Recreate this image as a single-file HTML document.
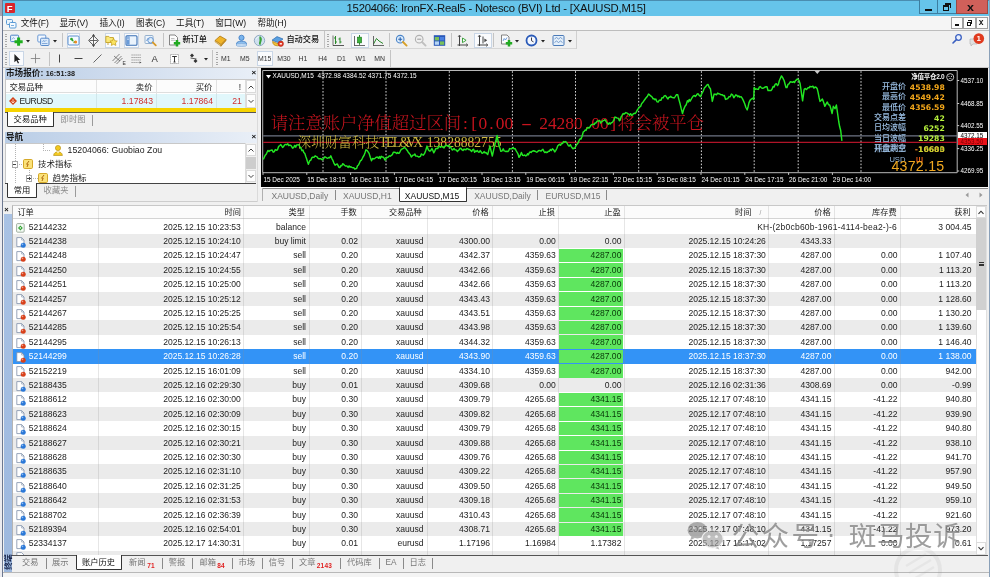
<!DOCTYPE html>
<html lang="zh"><head><meta charset="utf-8"><title>15204066: IronFX-Real5 - Notesco (BVI) Ltd - [XAUUSD,M15]</title>
<style>
*{box-sizing:border-box;margin:0;padding:0}
html,body{width:990px;height:577px;overflow:hidden;background:#f0f0f0}
body{font-family:"Liberation Sans","Noto Sans CJK SC",sans-serif;font-size:8.5px;color:#222;position:relative}
#app{position:absolute;left:0;top:0;width:990px;height:577px;overflow:hidden;background:#f0f0f0;will-change:transform}
.a{position:absolute;white-space:nowrap}
.t{position:absolute;white-space:nowrap;line-height:1}
.r{text-align:right}
svg{position:absolute;overflow:visible}
.hw{display:inline-block;width:.5em;text-align:center}
</style></head>
<body><div id="app">
<div class="a" style="left:0;top:0;width:990px;height:16.2px;background:#66c4ea"></div>
<div class="a" style="left:0;top:0;width:990px;height:1px;background:#4a8db0"></div>
<div class="a" style="left:4.5px;top:3px;width:10.6px;height:10.2px;background:#d8262c;border-radius:1px"></div>
<div class="t" style="left:6.7px;top:3.7px;font-size:9.5px;font-weight:bold;color:#fff">F</div>
<div class="t" id="title" style="left:346.5px;top:2.5px;font-size:11.3px;color:#111;letter-spacing:-0.215px">15204066: IronFX-Real5 - Notesco (BVI) Ltd - [XAUUSD,M15]</div>
<div class="a" style="left:919px;top:0;width:19px;height:13.8px;border:1px solid #3c7ea0;border-top:none;background:#66c4ea"></div>
<div class="a" style="left:937px;top:0;width:19.6px;height:13.8px;border:1px solid #3c7ea0;border-top:none;background:#66c4ea"></div>
<div class="a" style="left:956px;top:0;width:31.6px;height:13.8px;border:1px solid #9a4a44;border-top:none;background:#d0605a"></div>
<div class="a" style="left:925px;top:9px;width:7px;height:2px;background:#111"></div>
<div class="a" style="left:943px;top:5px;width:6px;height:6px;border:1px solid #111;border-top-width:2px"></div>
<div class="a" style="left:945px;top:3px;width:6px;height:5px;border:1px solid #111;border-top-width:2px;border-left:none;border-bottom:none"></div>
<div class="t" style="left:966.5px;top:2.5px;font-size:10px;font-weight:bold;color:#111;transform:scaleX(1.25);transform-origin:0 0">x</div>
<div class="a" style="left:0;top:0;width:2.2px;height:577px;background:#ececf0"></div>
<div class="a" style="left:0;top:0;width:2.2px;height:16.2px;background:#a4a4b4"></div>
<div class="a" style="left:2px;top:0;width:1px;height:577px;background:#6c7890"></div>
<div class="a" style="left:988.6px;top:0;width:1.4px;height:577px;background:#8aa0b8"></div>
<div class="a" style="left:3px;top:16.2px;width:985.6px;height:14.3px;background:#f5f5f5"></div>
<div class="a" style="left:3px;top:30.2px;width:985.6px;height:1px;background:#bdbdbd"></div>
<svg style="left:5.5px;top:18.5px" width="11" height="10" viewBox="0 0 11 10"><rect x="0.5" y="0.5" width="6" height="5" rx="1" fill="#eaf4fc" stroke="#5b9bd5"/><rect x="3.5" y="3.5" width="6.5" height="5.5" rx="1" fill="#f4faff" stroke="#5b9bd5"/><path d="M5 6.5h3" stroke="#5b9bd5" stroke-width="0.8"/></svg>
<div class="t" style="left:18.8px;top:18.6px;font-size:8.6px;color:#111;width:32.1px;text-align:center">文件(F)</div>
<div class="t" style="left:57.6px;top:18.6px;font-size:8.6px;color:#111;width:32.4px;text-align:center">显示(V)</div>
<div class="t" style="left:97.0px;top:18.6px;font-size:8.6px;color:#111;width:30.2px;text-align:center">插入(I)</div>
<div class="t" style="left:134.0px;top:18.6px;font-size:8.6px;color:#111;width:33.2px;text-align:center">图表(C)</div>
<div class="t" style="left:174.3px;top:18.6px;font-size:8.6px;color:#111;width:31.7px;text-align:center">工具(T)</div>
<div class="t" style="left:212.8px;top:18.6px;font-size:8.6px;color:#111;width:35.7px;text-align:center">窗口(W)</div>
<div class="t" style="left:255.2px;top:18.6px;font-size:8.6px;color:#111;width:33.6px;text-align:center">帮助(H)</div>
<div class="a" style="left:950.5px;top:16.6px;width:12.7px;height:12px;border:1px solid #a0a0a0;background:#fcfcfc"></div>
<div class="a" style="left:963.0px;top:16.6px;width:12.7px;height:12px;border:1px solid #a0a0a0;background:#fcfcfc"></div>
<div class="a" style="left:975.5px;top:16.6px;width:12.7px;height:12px;border:1px solid #a0a0a0;background:#fcfcfc"></div>
<div class="a" style="left:954.5px;top:24.4px;width:4.4px;height:1.6px;background:#111"></div>
<div class="a" style="left:966.5px;top:21.8px;width:4px;height:4px;border:1px solid #111;border-top-width:1.6px"></div>
<div class="a" style="left:968px;top:20.1px;width:4px;height:3.5px;border:1px solid #111;border-top-width:1.6px;border-left:none;border-bottom:none"></div>
<div class="t" style="left:978.8px;top:17.8px;font-size:8.5px;font-weight:bold;color:#111">x</div>
<div class="a" style="left:3px;top:31px;width:985.6px;height:36px;background:#f0f0f0"></div>
<div class="a" style="left:3px;top:48.2px;width:574px;height:1px;background:#d6d6d6"></div>
<div class="a" style="left:3px;top:66.6px;width:985.6px;height:1px;background:#c8c8c8"></div>
<div class="a" style="left:576.4px;top:31px;width:1px;height:17.6px;background:#d0d0d0"></div>
<div class="a" style="left:4.5px;top:33.5px;width:2px;height:13px;background:repeating-linear-gradient(180deg,#a8a8a8 0 1px,transparent 1px 2.4px)"></div>
<svg style="left:10.2px;top:33.8px" width="13" height="13" viewBox="0 0 13 13"><rect x="0.6" y="1.2" width="8" height="6.4" rx="0.9" fill="#eaf3fd" stroke="#4f86c8" stroke-width="1"/><path d="M2 5.4l1.4-1.8 1.4 1.2" stroke="#4f86c8" stroke-width="0.6" fill="none"/><path d="M8.6 3.6v8.2M4.5 7.7h8.2" stroke="#1eae1e" stroke-width="3"/></svg>
<svg style="left:26.2px;top:39.8px" width="4" height="2.4" viewBox="0 0 5 3"><path d="M0 0h5L2.5 3z" fill="#222"/></svg>
<svg style="left:36.8px;top:33.8px" width="13" height="13" viewBox="0 0 13 13"><rect x="0.8" y="1" width="8" height="7" rx="1" fill="#f4f9ff" stroke="#5b8fd0" stroke-width="0.9"/><rect x="3.6" y="4.2" width="8.4" height="7.3" rx="1" fill="#dcebfb" stroke="#4a7fc4" stroke-width="0.9"/><path d="M5 9.5h5.5M5.5 8l1-1.5 1.5 1 1.5-1.5" stroke="#4a7fc4" stroke-width="0.6" fill="none"/></svg>
<svg style="left:52.8px;top:39.8px" width="4" height="2.4" viewBox="0 0 5 3"><path d="M0 0h5L2.5 3z" fill="#222"/></svg>
<div class="a" style="left:62.0px;top:33.0px;width:1px;height:14px;background:#c4c4c4"></div>
<div class="a" style="left:67.3px;top:32.6px;width:13.2px;height:15.0px;border:1px solid #c9d6e6;background:#fafbfd"></div>
<svg style="left:67.3px;top:33.8px" width="13" height="13" viewBox="0 0 13 13"><rect x="1" y="2" width="11" height="9" rx="1.2" fill="#f4faff" stroke="#5b8fd0" stroke-width="1"/><path d="M4 4.8l2.2 2M6.5 8.5l2.5-1" stroke="#28a428" stroke-width="1.6"/><circle cx="8.6" cy="8" r="1.5" fill="#f08a24"/><circle cx="4.5" cy="5" r="1.3" fill="#2da82d"/></svg>
<svg style="left:86.8px;top:33.8px" width="13" height="13" viewBox="0 0 13 13"><path d="M6.5 1.6l4.9 4.9-4.9 4.9-4.9-4.9z" fill="#fafafa" stroke="#555" stroke-width="1"/><path d="M6.5 0.4v12.2M2.4 6.5h8.2" stroke="#555" stroke-width="0.9"/><path d="M6.5 0l1.5 2h-3zM6.5 13l1.5-2h-3z" fill="#444"/></svg>
<div class="a" style="left:104.5px;top:32.6px;width:15.2px;height:15.0px;border:1px solid #c9d6e6;background:#fafbfd"></div>
<svg style="left:105.3px;top:33.8px" width="13" height="13" viewBox="0 0 13 13"><path d="M0.8 2.4h3l1 1.1h3.6v5H0.8z" fill="#fae878" stroke="#c09a18" stroke-width="0.8"/><path d="M3 8.5v2.5" stroke="#c09a18" stroke-width="0.8"/><path d="M8.6 4.4l1.15 2.35 2.55.35-1.85 1.8.45 2.55-2.3-1.2-2.3 1.2.45-2.55L4.9 7.1l2.55-.35z" fill="#fbe562" stroke="#c09a18" stroke-width="0.7"/></svg>
<div class="a" style="left:124.0px;top:32.6px;width:15.4px;height:15.0px;border:1px solid #c9d6e6;background:#fafbfd"></div>
<svg style="left:125.3px;top:33.8px" width="13" height="13" viewBox="0 0 13 13"><rect x="1" y="1.8" width="11" height="9.5" rx="1" fill="#eaf3fc" stroke="#3a6fb4" stroke-width="1.1"/><rect x="1.6" y="2.4" width="3" height="8.3" fill="#6a9bd8"/><path d="M2.2 4h1.6M2.2 5.5h1.6" stroke="#fff" stroke-width="0.6"/></svg>
<svg style="left:144.1px;top:33.8px" width="13" height="13" viewBox="0 0 13 13"><rect x="1" y="1.5" width="8" height="8" rx="0.8" fill="#eef5fc" stroke="#8aa8c8" stroke-width="0.9"/><path d="M2.5 7l1.3-2.5 1.2 1.5 1.2-2" stroke="#4a7fc4" stroke-width="0.7" fill="none"/><circle cx="6.6" cy="6.2" r="2.8" fill="#dcecfa" fill-opacity="0.7" stroke="#5b8fd0" stroke-width="0.9"/><path d="M8.8 8.4l3 3" stroke="#d89a28" stroke-width="1.8" stroke-linecap="round"/></svg>
<div class="a" style="left:162.7px;top:33.0px;width:1px;height:14px;background:#c4c4c4"></div>
<svg style="left:168.1px;top:33.8px" width="13" height="13" viewBox="0 0 13 13"><path d="M1.5 1h5.5l2.5 2.5V11h-8z" fill="#fdfdfd" stroke="#777" stroke-width="0.9"/><path d="M3 4.5h3.5M3 6.3h4.5" stroke="#999" stroke-width="0.6"/><path d="M9 6v6.4M5.8 9.2h6.4" stroke="#22aa22" stroke-width="2.5"/></svg>
<div class="t" style="left:182.4px;top:36.2px;font-size:8.2px;font-weight:500;color:#111">新订单</div>
<svg style="left:214.1px;top:33.8px" width="13" height="13" viewBox="0 0 13 13"><path d="M1 6.5l5-4.5 6 3.5-5 5z" fill="#f0b428" stroke="#b07810" stroke-width="0.8"/><path d="M1 6.5l6 4.5v1.2l-6-4.5z" fill="#fbe7a0" stroke="#b07810" stroke-width="0.6"/><path d="M7 11l5-5.5v1.2l-5 5.5z" fill="#d89818" stroke="#b07810" stroke-width="0.6"/></svg>
<svg style="left:234.5px;top:33.8px" width="13" height="13" viewBox="0 0 13 13"><circle cx="6.5" cy="3.8" r="2.6" fill="#7ab4ec" stroke="#3a78c0" stroke-width="0.8"/><path d="M1.5 9.5c0-3 10-3 10 0v1.5h-10z" fill="#8cc0f0" stroke="#3a78c0" stroke-width="0.8"/><ellipse cx="6.5" cy="11" rx="5.5" ry="1.5" fill="#c4dcf4" stroke="#7aa4d4" stroke-width="0.6"/></svg>
<svg style="left:252.8px;top:34.1px" width="13" height="13" viewBox="0 0 13 13"><circle cx="6.5" cy="6.5" r="5.2" fill="#cfe0f0" stroke="#8aa4bc" stroke-width="0.9"/><path d="M6.8 2c2 1 2.6 3.4 1.6 5.4-.6 1.4-.4 2.6-1.2 3.8-1.6-.6-1.4-2.6-.8-4C7 5.800 5.600 4 6.800 2z" fill="#3aa43a"/><path d="M3 5.500c1-2 2-2.600 3-3" stroke="#f4f8fc" stroke-width="0.9" fill="none"/></svg>
<svg style="left:271.0px;top:33.8px" width="13" height="13" viewBox="0 0 13 13"><path d="M1 6.200l5-3.600 6 2.400-4.800 3.600z" fill="#5aa0e0" stroke="#2a6ab0" stroke-width="0.7"/><path d="M1.600 7.400c0 3 2 4.400 5 4.400s4.400-2 4.400-4.600l-3.800 2.600z" fill="#f2c038" stroke="#b08010" stroke-width="0.7"/><circle cx="9.800" cy="9.800" r="2.700" fill="#e23a26" stroke="#a81c10" stroke-width="0.5"/><rect x="8.700" y="9.100" width="2.200" height="1.400" fill="#fff"/></svg>
<div class="t" style="left:286.4px;top:36.2px;font-size:8.2px;font-weight:500;color:#111">自动交易</div>
<div class="a" style="left:324.4px;top:31.0px;width:1px;height:17px;background:#c4c4c4"></div>
<div class="a" style="left:327.4px;top:33.5px;width:2px;height:13px;background:repeating-linear-gradient(180deg,#a8a8a8 0 1px,transparent 1px 2.4px)"></div>
<svg style="left:332.3px;top:33.8px" width="13" height="13" viewBox="0 0 13 13"><path d="M3.5 2v8M3.5 4h-1.5M3.5 8h1.5M8 3.5v6M8 5h-1.5M8 8h1.5" stroke="#2a8a2a" stroke-width="1"/><path d="M1 11.5h11" stroke="#444" stroke-width="0.9"/><path d="M1 1.5v10" stroke="#444" stroke-width="0.7"/></svg>
<div class="a" style="left:351.0px;top:32.6px;width:18.0px;height:15.0px;border:1px solid #c9d6e6;background:#fafbfd"></div>
<svg style="left:353.4px;top:33.8px" width="13" height="13" viewBox="0 0 13 13"><rect x="4.6" y="3.2" width="3.8" height="5.6" fill="#3cb43c" stroke="#1a7a1a" stroke-width="0.7"/><path d="M6.5 1v2.2M6.5 8.8v2" stroke="#1a7a1a" stroke-width="0.9"/><path d="M1 11.5h11M1.5 2v9.5" stroke="#444" stroke-width="0.8"/></svg>
<svg style="left:371.7px;top:33.8px" width="13" height="13" viewBox="0 0 13 13"><path d="M1.5 10l3-5.5 2.5 2.5 4 2.5" stroke="#2a8a2a" stroke-width="1" fill="none"/><path d="M1 11.5h11M1.5 2v9.5" stroke="#444" stroke-width="0.8"/></svg>
<div class="a" style="left:389.4px;top:33.0px;width:1px;height:14px;background:#c4c4c4"></div>
<svg style="left:394.5px;top:33.8px" width="13" height="13" viewBox="0 0 13 13"><circle cx="5.2" cy="5.2" r="3.8" fill="#dcecfc" stroke="#4a84c8" stroke-width="1.1"/><path d="M3.2 5.2h4M5.2 3.2v4" stroke="#2a64b0" stroke-width="1.1"/><path d="M8 8l3.6 3.6" stroke="#d8a028" stroke-width="1.9" stroke-linecap="round"/></svg>
<svg style="left:413.8px;top:33.8px" width="13" height="13" viewBox="0 0 13 13"><circle cx="5.2" cy="5.2" r="3.8" fill="#f0f0f0" stroke="#b0b0b0" stroke-width="1.1"/><path d="M3.2 5.2h4" stroke="#a0a0a0" stroke-width="1.1"/><path d="M8 8l3.6 3.6" stroke="#c0c0c0" stroke-width="1.9" stroke-linecap="round"/></svg>
<svg style="left:432.9px;top:33.8px" width="13" height="13" viewBox="0 0 13 13"><rect x="0.800" y="1.200" width="11.400" height="10.600" fill="#2a58b8"/><rect x="1.800" y="3" width="4.200" height="3.400" fill="#7ac05a"/><rect x="7" y="3" width="4.200" height="3.400" fill="#4a80e0"/><rect x="1.800" y="7.400" width="4.200" height="3.400" fill="#b4d4f4"/><rect x="7" y="7.400" width="4.200" height="3.400" fill="#7ac05a"/></svg>
<div class="a" style="left:450.6px;top:33.0px;width:1px;height:14px;background:#c4c4c4"></div>
<svg style="left:456.2px;top:33.8px" width="13" height="13" viewBox="0 0 13 13"><path d="M1.500 11h10M3.500 1.500v10.500" stroke="#444" stroke-width="1"/><path d="M2 3l1.500-2 1.500 2M10 9.500l2 1.500-2 1.500" stroke="#444" stroke-width="0.700" fill="none"/><path d="M6.500 4l3.600 2.300-3.600 2.300z" fill="#fff" stroke="#2a9a2a" stroke-width="0.900"/></svg>
<div class="a" style="left:474.0px;top:32.6px;width:17.5px;height:15.0px;border:1px solid #c9d6e6;background:#fafbfd"></div>
<svg style="left:476.2px;top:33.8px" width="13" height="13" viewBox="0 0 13 13"><path d="M1.500 11h10M3.500 1.500v10.500" stroke="#444" stroke-width="1"/><path d="M2 3l1.500-2 1.500 2M10 9.500l2 1.500-2 1.500" stroke="#444" stroke-width="0.700" fill="none"/><path d="M7 2.500v7" stroke="#444" stroke-width="1"/><path d="M8.400 4.400l2.800 1.900-2.800 1.900z" fill="#444"/></svg>
<div class="a" style="left:493.2px;top:33.0px;width:1px;height:14px;background:#c4c4c4"></div>
<svg style="left:499.5px;top:33.8px" width="13" height="13" viewBox="0 0 13 13"><path d="M1.5 1h5.5l2 2V10h-7.5z" fill="#fcfcfc" stroke="#777" stroke-width="0.9"/><path d="M3 7l1.2-2.5L5.5 6l1.5-2.5" stroke="#3a7ad0" stroke-width="0.7" fill="none"/><path d="M9 6v6.4M5.8 9.2h6.4" stroke="#22aa22" stroke-width="2.5"/></svg>
<svg style="left:514.7px;top:39.8px" width="4" height="2.4" viewBox="0 0 5 3"><path d="M0 0h5L2.5 3z" fill="#222"/></svg>
<svg style="left:525.3px;top:33.8px" width="13" height="13" viewBox="0 0 13 13"><circle cx="6.5" cy="6.5" r="5" fill="#f4f8ff" stroke="#2a5ab8" stroke-width="1.8"/><path d="M6.5 3.5v3.2l2 1.2" stroke="#223" stroke-width="0.9" fill="none"/></svg>
<svg style="left:541.3px;top:39.8px" width="4" height="2.4" viewBox="0 0 5 3"><path d="M0 0h5L2.5 3z" fill="#222"/></svg>
<svg style="left:552.0px;top:33.8px" width="13" height="13" viewBox="0 0 13 13"><rect x="1" y="1.5" width="11" height="10" rx="1" fill="#e4effa" stroke="#4a7ab8" stroke-width="1"/><path d="M2.5 5l2-1.5 2 1.5 2-1.5 2 1.5M2.5 8.5l2-1.5 2 1.5 2-1.5 2 1.5" stroke="#4a7ab8" stroke-width="0.7" fill="none"/></svg>
<svg style="left:568.3px;top:39.8px" width="4" height="2.4" viewBox="0 0 5 3"><path d="M0 0h5L2.5 3z" fill="#222"/></svg>
<div class="a" style="left:4.5px;top:51.5px;width:2px;height:13px;background:repeating-linear-gradient(180deg,#a8a8a8 0 1px,transparent 1px 2.4px)"></div>
<div class="a" style="left:8.5px;top:50.6px;width:15.5px;height:15.2px;border:1px solid #c9d6e6;background:#fafbfd"></div>
<svg style="left:9.5px;top:52.1px" width="13" height="13" viewBox="0 0 13 13"><path d="M4.4 2v8.2l2-1.8 1.5 3.1 1.2-.55-1.5-3h2.7z" fill="#222"/></svg>
<svg style="left:29.3px;top:52.1px" width="13" height="13" viewBox="0 0 13 13"><path d="M6.5 1.8v9.4M1.8 6.5h9.4" stroke="#7a7a7a" stroke-width="0.8"/></svg>
<div class="a" style="left:48.5px;top:51.5px;width:1px;height:14px;background:#c4c4c4"></div>
<svg style="left:52.5px;top:52.1px" width="13" height="13" viewBox="0 0 13 13"><path d="M6.5 2.5v8" stroke="#444" stroke-width="1"/></svg>
<svg style="left:72.3px;top:52.1px" width="13" height="13" viewBox="0 0 13 13"><path d="M2.5 6.5h8" stroke="#444" stroke-width="1"/></svg>
<svg style="left:90.5px;top:52.1px" width="13" height="13" viewBox="0 0 13 13"><path d="M2.5 10.5l8-8" stroke="#555" stroke-width="0.9"/></svg>
<svg style="left:111.1px;top:52.1px" width="13" height="13" viewBox="0 0 13 13"><path d="M1.5 9l7-7M3.5 11l7-7M5.5 12l6-6" stroke="#555" stroke-width="0.7"/><path d="M3 4l6 5" stroke="#555" stroke-width="0.7"/></svg>
<div class="t" style="left:122.5px;top:60.5px;font-size:5px;color:#333">E</div>
<svg style="left:129.9px;top:52.1px" width="13" height="13" viewBox="0 0 13 13"><path d="M1.5 3h10M1.5 5.5h10M1.5 8h10M1.5 10.5h7" stroke="#666" stroke-width="0.7" stroke-dasharray="1.2 0.8"/><path d="M9.5 9.5l2 1-2 1z" fill="#444"/></svg>
<div class="t" style="left:151.6px;top:54px;font-size:9.5px;color:#333">A</div>
<svg style="left:167.7px;top:52.1px" width="13" height="13" viewBox="0 0 13 13"><rect x="2.5" y="2.5" width="8" height="9" fill="#fff" stroke="#777" stroke-width="0.7" stroke-dasharray="1.2 0.8"/><path d="M4.2 4.5h4.6M6.5 4.5v5.5M5.5 10h2" stroke="#333" stroke-width="1"/></svg>
<svg style="left:186.8px;top:52.1px" width="13" height="13" viewBox="0 0 13 13"><path d="M3 3.5l2-2 2 2-2 2zM6.5 9l2-2 2 2-2 2z" fill="#333"/><path d="M3.5 6l6 1" stroke="#333" stroke-width="0.8"/></svg>
<svg style="left:203.5px;top:58.3px" width="4" height="2.4" viewBox="0 0 5 3"><path d="M0 0h5L2.5 3z" fill="#222"/></svg>
<div class="a" style="left:212.0px;top:50.0px;width:1px;height:17px;background:#c4c4c4"></div>
<div class="a" style="left:215.5px;top:51.5px;width:2px;height:13px;background:repeating-linear-gradient(180deg,#a8a8a8 0 1px,transparent 1px 2.4px)"></div>
<div class="a" style="left:256.6px;top:50.6px;width:16.4px;height:15.2px;border:1px solid #c9d6e6;background:#fafbfd"></div>
<div class="t" style="left:213.8px;top:56.4px;width:24px;text-align:center;font-size:6.9px;color:#333">M1</div>
<div class="t" style="left:232.8px;top:56.4px;width:24px;text-align:center;font-size:6.9px;color:#333">M5</div>
<div class="t" style="left:252.6px;top:56.4px;width:24px;text-align:center;font-size:6.9px;color:#333">M15</div>
<div class="t" style="left:272.0px;top:56.4px;width:24px;text-align:center;font-size:6.9px;color:#333">M30</div>
<div class="t" style="left:291.0px;top:56.4px;width:24px;text-align:center;font-size:6.9px;color:#333">H1</div>
<div class="t" style="left:310.7px;top:56.4px;width:24px;text-align:center;font-size:6.9px;color:#333">H4</div>
<div class="t" style="left:329.5px;top:56.4px;width:24px;text-align:center;font-size:6.9px;color:#333">D1</div>
<div class="t" style="left:348.6px;top:56.4px;width:24px;text-align:center;font-size:6.9px;color:#333">W1</div>
<div class="t" style="left:367.7px;top:56.4px;width:24px;text-align:center;font-size:6.9px;color:#333">MN</div>
<div class="a" style="left:390.0px;top:50.0px;width:1px;height:17px;background:#c4c4c4"></div>
<svg style="left:951px;top:33px" width="12" height="12" viewBox="0 0 12 12"><circle cx="7.5" cy="4.5" r="2.8" fill="#e8f0ff" stroke="#3a5fc0" stroke-width="1.3"/><path d="M5.4 6.6L2 10" stroke="#3a5fc0" stroke-width="1.6" stroke-linecap="round"/></svg>
<svg style="left:968px;top:32px" width="18" height="15" viewBox="0 0 18 15"><path d="M2 7h7v5H5l-2 2v-2H2z" fill="#e0e0e0" stroke="#b0b0b0" stroke-width="0.6"/><circle cx="10.8" cy="6.6" r="5.3" fill="#e03a1e"/></svg>
<div class="t" style="left:976.6px;top:34.6px;font-size:8px;font-weight:bold;color:#fff">1</div>
<div class="a" style="left:4.5px;top:67.6px;width:252px;height:11.6px;background:linear-gradient(90deg,#b9cde6 0%,#cfdcee 45%,#e9eff7 100%)"></div>
<div class="t" style="left:6px;top:69px;font-size:8.6px;font-weight:bold;color:#1a1a1a">市场报价: <span style="font-size:7.2px;letter-spacing:0.1px">16:51:38</span></div>
<div class="t" style="left:251.4px;top:68.6px;font-size:8px;font-weight:bold;color:#111">×</div>
<div class="a" style="left:5px;top:79.2px;width:251px;height:33px;background:#fff;border:1px solid #c8c8c8;border-bottom:none"></div>
<div class="a" style="left:6px;top:80px;width:238.5px;height:13.4px;background:#fcfcfc;border-bottom:1px solid #dedede"></div>
<div class="a" style="left:96.4px;top:80px;width:1px;height:28px;background:#e2e2e2"></div>
<div class="a" style="left:155.5px;top:80px;width:1px;height:28px;background:#e2e2e2"></div>
<div class="a" style="left:215.8px;top:80px;width:1px;height:28px;background:#e2e2e2"></div>
<div class="t" style="left:9.5px;top:82.6px;font-size:8.4px;color:#222">交易品种</div>
<div class="t r" style="left:100px;top:82.6px;width:52.6px;font-size:8.4px;color:#222">卖价</div>
<div class="t r" style="left:160px;top:82.6px;width:52.4px;font-size:8.4px;color:#222">买价</div>
<div class="t r" style="left:220px;top:82.6px;width:21px;font-size:8.4px;color:#222">!</div>
<div class="a" style="left:6px;top:93.6px;width:238.5px;height:14.6px;background:#e1f7fb"></div>
<div class="a" style="left:96.4px;top:93.6px;width:1px;height:14.6px;background:#cfe6ea"></div>
<div class="a" style="left:155.5px;top:93.6px;width:1px;height:14.6px;background:#cfe6ea"></div>
<div class="a" style="left:215.8px;top:93.6px;width:1px;height:14.6px;background:#cfe6ea"></div>
<svg style="left:8.5px;top:97px" width="8" height="8" viewBox="0 0 8 8"><path d="M4 0l4 4-4 4-4-4z" fill="#d2421a"/><path d="M4 2.2v3.6M2.4 4.4L4 6l1.6-1.6" stroke="#ffd9c8" stroke-width="0.9" fill="none"/></svg>
<div class="t" style="left:19.5px;top:97px;font-size:8.6px;color:#222;letter-spacing:-0.5px">EURUSD</div>
<div class="t r" style="left:100px;top:97px;width:53px;font-size:8.7px;color:#d03030">1.17843</div>
<div class="t r" style="left:160px;top:97px;width:53px;font-size:8.7px;color:#d03030">1.17864</div>
<div class="t r" style="left:220px;top:97px;width:21.8px;font-size:8.7px;color:#d03030">21</div>
<div class="a" style="left:5px;top:108.2px;width:251px;height:3.6px;background:#f6d300"></div>
<div class="a" style="left:244.8px;top:80px;width:11px;height:28.2px;background:#f3f3f3;border-left:1px solid #dcdcdc"></div>
<div class="a" style="left:245.5px;top:80.4px;width:10px;height:13px;background:#fdfdfd;border:1px solid #dadada"></div>
<div class="a" style="left:245.5px;top:94.4px;width:10px;height:13.4px;background:#fdfdfd;border:1px solid #dadada"></div>
<svg style="left:247.6px;top:84.5px" width="6" height="5" viewBox="0 0 6 5"><path d="M0.5 3.5L3 1l2.5 2.5" stroke="#444" stroke-width="1" fill="none"/></svg>
<svg style="left:247.6px;top:98.9px" width="6" height="5" viewBox="0 0 6 5"><path d="M0.5 1L3 3.5 5.5 1" stroke="#444" stroke-width="1" fill="none"/></svg>
<div class="a" style="left:5px;top:111.8px;width:251px;height:1px;background:#555"></div>
<div class="a" style="left:7.2px;top:111.8px;width:46.8px;height:15.4px;background:#fff;border:1px solid #333;border-top:none;border-radius:0 0 1.5px 1.5px"></div>
<div class="t" style="left:13.6px;top:115.4px;font-size:8.3px;color:#111">交易品种</div>
<div class="t" style="left:60.6px;top:115.4px;font-size:8.3px;color:#8a8a8a">即时图</div>
<div class="a" style="left:92px;top:114.6px;width:1px;height:11px;background:#9a9a9a"></div>
<div class="a" style="left:4.5px;top:132.2px;width:252px;height:10.6px;background:linear-gradient(90deg,#b9cde6 0%,#cfdcee 45%,#e9eff7 100%)"></div>
<div class="t" style="left:6px;top:133.2px;font-size:8.6px;font-weight:bold;color:#1a1a1a">导航</div>
<div class="t" style="left:251.4px;top:133px;font-size:8px;font-weight:bold;color:#111">×</div>
<div class="a" style="left:5px;top:142.8px;width:251px;height:40.2px;background:#fff;border:1px solid #c8c8c8;border-bottom:none"></div>
<div class="a" style="left:244.8px;top:143.4px;width:11px;height:39.4px;background:#f0f0f0;border-left:1px solid #dcdcdc"></div>
<div class="a" style="left:245.5px;top:143.8px;width:10px;height:12.6px;background:#fdfdfd;border:1px solid #dadada"></div>
<div class="a" style="left:245.5px;top:157px;width:10px;height:12px;background:#cdcdcd"></div>
<div class="a" style="left:245.5px;top:169.8px;width:10px;height:12.6px;background:#fdfdfd;border:1px solid #dadada"></div>
<svg style="left:247.6px;top:147.5px" width="6" height="5" viewBox="0 0 6 5"><path d="M0.5 3.5L3 1l2.5 2.5" stroke="#444" stroke-width="1" fill="none"/></svg>
<svg style="left:247.6px;top:173.9px" width="6" height="5" viewBox="0 0 6 5"><path d="M0.5 1L3 3.5 5.5 1" stroke="#444" stroke-width="1" fill="none"/></svg>
<div class="a" style="left:14.6px;top:143.5px;width:1px;height:39px;background:repeating-linear-gradient(180deg,#b4b4b4 0 1px,transparent 1px 2px)"></div>
<div class="a" style="left:43.2px;top:143.5px;width:1px;height:7px;background:repeating-linear-gradient(180deg,#b4b4b4 0 1px,transparent 1px 2px)"></div>
<div class="a" style="left:43.2px;top:150.4px;width:7px;height:1px;background:repeating-linear-gradient(90deg,#b4b4b4 0 1px,transparent 1px 2px)"></div>
<div class="a" style="left:15px;top:164.2px;width:8px;height:1px;background:repeating-linear-gradient(90deg,#b4b4b4 0 1px,transparent 1px 2px)"></div>
<div class="a" style="left:29px;top:170px;width:1px;height:12px;background:repeating-linear-gradient(180deg,#b4b4b4 0 1px,transparent 1px 2px)"></div>
<div class="a" style="left:29px;top:178.2px;width:9px;height:1px;background:repeating-linear-gradient(90deg,#b4b4b4 0 1px,transparent 1px 2px)"></div>
<div class="a" style="left:11.6px;top:161.2px;width:6.4px;height:6.4px;background:#fff;border:1px solid #a8a8a8"></div><div class="a" style="left:13.2px;top:164px;width:3.2px;height:1px;background:#444"></div>
<div class="a" style="left:25.8px;top:175.2px;width:6.4px;height:6.4px;background:#fff;border:1px solid #a8a8a8"></div><div class="a" style="left:27.4px;top:178px;width:3.2px;height:1px;background:#444"></div><div class="a" style="left:28.5px;top:176.9px;width:1px;height:3.2px;background:#444"></div>
<svg style="left:52.8px;top:144.6px" width="10" height="11" viewBox="0 0 10 11"><circle cx="5" cy="3" r="2.6" fill="#f2c81e" stroke="#b08a10" stroke-width="0.6"/><path d="M0.6 10.5c0-5 8.8-5 8.8 0z" fill="#f2c81e" stroke="#b08a10" stroke-width="0.6"/><path d="M3.6 6.4l1.4 2 1.4-2" fill="#fff6c8"/></svg>
<div class="t" style="left:67.6px;top:146px;font-size:8.7px;color:#222;letter-spacing:0.04px">15204066: Guobiao Zou</div>
<svg style="left:23.0px;top:159.2px" width="10" height="10" viewBox="0 0 10 10"><rect x="0.5" y="0.5" width="9" height="9" rx="1.2" fill="#fbe27a" stroke="#d0a018" stroke-width="0.9"/><path d="M6 2L3.6 5.2h1.6L4 8" stroke="#b06a10" stroke-width="1" fill="none"/></svg>
<div class="t" style="left:38px;top:160px;font-size:8.5px;color:#222">技术指标</div>
<svg style="left:38.0px;top:173.4px" width="10" height="10" viewBox="0 0 10 10"><rect x="0.5" y="0.5" width="9" height="9" rx="1.2" fill="#fbe27a" stroke="#d0a018" stroke-width="0.9"/><path d="M6 2L3.6 5.2h1.6L4 8" stroke="#b06a10" stroke-width="1" fill="none"/></svg>
<div class="t" style="left:52.5px;top:174.2px;font-size:8.5px;color:#222">趋势指标</div>
<div class="a" style="left:5px;top:182.8px;width:251px;height:1px;background:#444"></div>
<div class="a" style="left:5px;top:183.8px;width:251px;height:15px;background:#f0f0f0"></div>
<div class="a" style="left:7.2px;top:182.8px;width:29.8px;height:15px;background:#fff;border:1px solid #333;border-top:none;border-radius:0 0 1.5px 1.5px"></div>
<div class="t" style="left:13.8px;top:186px;font-size:8.3px;color:#111">常用</div>
<div class="t" style="left:43.6px;top:186px;font-size:8.3px;color:#8a8a8a">收藏夹</div>
<div class="a" style="left:75.2px;top:185.6px;width:1px;height:11px;background:#9a9a9a"></div>
<div class="a" style="left:3px;top:201.4px;width:255px;height:1px;background:#cdcdcd"></div>
<div class="a" style="left:257.4px;top:67.6px;width:1px;height:134px;background:#dadada"></div>
<div class="a" style="left:260.6px;top:68.2px;width:727.6px;height:118.6px;background:#000"></div>
<svg style="left:0;top:0" width="990" height="577" viewBox="0 0 990 577"><path d="M262.7 70.5H957.2V172.7H262.7z" fill="none" stroke="#b8b8b8" stroke-width="1"/><path d="M323.0 71.2V172" stroke="#d8d8d8" stroke-width="1" stroke-dasharray="1.6 1.7"/><path d="M386.0 71.2V172" stroke="#d8d8d8" stroke-width="1" stroke-dasharray="1.6 1.7"/><path d="M449.3 71.2V172" stroke="#d8d8d8" stroke-width="1" stroke-dasharray="1.6 1.7"/><path d="M512.4 71.2V172" stroke="#d8d8d8" stroke-width="1" stroke-dasharray="1.6 1.7"/><path d="M575.5 71.2V172" stroke="#d8d8d8" stroke-width="1" stroke-dasharray="1.6 1.7"/><path d="M638.7 71.2V172" stroke="#d8d8d8" stroke-width="1" stroke-dasharray="1.6 1.7"/><path d="M701.4 71.2V172" stroke="#d8d8d8" stroke-width="1" stroke-dasharray="1.6 1.7"/><path d="M754.2 71.2V172" stroke="#d8d8d8" stroke-width="1" stroke-dasharray="1.6 1.7"/><path d="M798.2 71.2V172" stroke="#d8d8d8" stroke-width="1" stroke-dasharray="1.6 1.7"/><path d="M861.0 71.2V172" stroke="#d8d8d8" stroke-width="1" stroke-dasharray="1.6 1.7"/><path d="M814.5 70.8h5.6l-2.8 3.2z" fill="#c8c8c8"/><path d="M263.2 135.9H957" stroke="#6e7484" stroke-width="1.4"/><path d="M263.2 142.4H957" stroke="#b01428" stroke-width="1.4"/><path d="M263.0 172.7v2.2" stroke="#c8c8c8" stroke-width="1"/><path d="M306.8 172.7v2.2" stroke="#c8c8c8" stroke-width="1"/><path d="M350.6 172.7v2.2" stroke="#c8c8c8" stroke-width="1"/><path d="M394.4 172.7v2.2" stroke="#c8c8c8" stroke-width="1"/><path d="M438.2 172.7v2.2" stroke="#c8c8c8" stroke-width="1"/><path d="M482.0 172.7v2.2" stroke="#c8c8c8" stroke-width="1"/><path d="M525.8 172.7v2.2" stroke="#c8c8c8" stroke-width="1"/><path d="M569.6 172.7v2.2" stroke="#c8c8c8" stroke-width="1"/><path d="M613.4 172.7v2.2" stroke="#c8c8c8" stroke-width="1"/><path d="M657.2 172.7v2.2" stroke="#c8c8c8" stroke-width="1"/><path d="M701.0 172.7v2.2" stroke="#c8c8c8" stroke-width="1"/><path d="M744.8 172.7v2.2" stroke="#c8c8c8" stroke-width="1"/><path d="M788.6 172.7v2.2" stroke="#c8c8c8" stroke-width="1"/><path d="M832.4 172.7v2.2" stroke="#c8c8c8" stroke-width="1"/><path d="M957.2 80.5h2" stroke="#c8c8c8" stroke-width="1"/><path d="M957.2 103.5h2" stroke="#c8c8c8" stroke-width="1"/><path d="M957.2 125.6h2" stroke="#c8c8c8" stroke-width="1"/><path d="M957.2 148.6h2" stroke="#c8c8c8" stroke-width="1"/><path d="M957.2 171.0h2" stroke="#c8c8c8" stroke-width="1"/></svg>
<svg style="left:265.5px;top:74.6px" width="5" height="4" viewBox="0 0 5 4"><path d="M0 0h5L2.5 3.6z" fill="#fff"/></svg>
<div class="t" style="left:272.6px;top:72.6px;font-size:6.45px;color:#fff;letter-spacing:0.02px">XAUUSD,M15&nbsp;&nbsp;4372.98 4384.52 4371.75 4372.15</div>
<div class="t" id="redtxt" style="left:270.8px;top:115.3px;font-size:17.4px;font-weight:300;color:#c8141e;font-family:'Liberation Serif','Noto Serif CJK SC',serif;letter-spacing:-0.1px">请注意账户净值超过区间<span class="hw">:</span><span class="hw">[</span><span class="hw">0</span><span class="hw">.</span><span class="hw">0</span><span class="hw">0</span><span class="hw">&nbsp;</span><span class="hw" style="transform:scaleX(1.9)">-</span><span class="hw">&nbsp;</span><span class="hw">2</span><span class="hw">4</span><span class="hw">2</span><span class="hw">8</span><span class="hw">0</span><span class="hw">.</span><span class="hw">0</span><span class="hw">0</span><span class="hw">]</span>将会被平仓</div>
<div class="t" id="yeltxt" style="left:297.6px;top:136px;font-size:13.6px;font-weight:300;color:#cdb83e;font-family:'Liberation Serif','Noto Serif CJK SC',serif">深圳财富科技<span class="hw">T</span><span class="hw">E</span><span class="hw">L</span><span class="hw">&amp;</span><span class="hw">V</span><span class="hw">X</span><span class="hw">&nbsp;</span><span class="hw">1</span><span class="hw">3</span><span class="hw">8</span><span class="hw">2</span><span class="hw">8</span><span class="hw">8</span><span class="hw">8</span><span class="hw">2</span><span class="hw">7</span><span class="hw">5</span><span class="hw">5</span></div>
<svg style="left:0;top:0" width="990" height="577" viewBox="0 0 990 577"><path d="M263.3 159.5 L264.2 157.4 L265.2 155.3 L266.2 154.2 L267.1 152.2 L268.0 150.4 L269.0 151.4 L269.9 150.4 L270.8 150.4 L272.0 149.9 L273.2 152.2 L274.3 151.6 L275.3 149.6 L276.4 150.2 L277.5 149.8 L278.7 146.3 L279.9 145.5 L280.8 144.6 L281.7 145.9 L282.6 147.4 L283.5 146.7 L284.6 144.8 L285.6 144.4 L286.7 144.8 L287.8 143.7 L288.7 145.6 L289.6 145.1 L290.5 145.2 L291.4 146.1 L292.6 148.2 L293.8 147.3 L294.7 145.4 L295.7 147.2 L296.6 144.9 L297.5 144.9 L298.4 144.7 L299.3 145.6 L300.2 147.1 L301.1 148.5 L302.0 150.7 L302.9 150.0 L303.8 152.4 L304.8 153.4 L305.7 156.3 L306.6 158.7 L307.5 161.7 L308.4 164.3 L309.6 160.9 L310.8 160.1 L311.9 157.7 L312.9 157.1 L314.0 157.4 L315.1 155.8 L316.1 156.4 L317.1 156.9 L318.1 158.3 L319.0 158.8 L319.9 158.7 L320.8 158.6 L321.7 159.5 L322.7 159.7 L323.6 158.8 L324.5 156.9 L325.4 157.0 L326.6 157.9 L327.8 158.3 L328.8 157.5 L329.8 157.8 L330.8 155.8 L331.9 158.6 L332.9 160.4 L333.9 163.1 L335.1 165.2 L336.3 164.3 L337.2 163.9 L338.1 165.6 L339.0 167.4 L340.0 167.4 L340.9 165.6 L341.8 165.8 L342.7 163.7 L343.6 164.3 L344.5 165.3 L345.4 166.0 L346.3 165.9 L347.2 166.1 L348.1 167.4 L349.1 165.9 L350.0 167.2 L350.9 166.7 L351.8 167.4 L352.8 167.7 L353.8 167.7 L354.8 169.2 L355.7 168.6 L356.6 168.5 L357.5 165.8 L358.5 165.0 L359.4 163.1 L360.3 160.9 L361.2 160.4 L362.1 158.8 L363.0 157.0 L364.0 155.4 L365.0 152.7 L366.0 149.8 L367.1 150.3 L368.1 151.8 L369.1 153.4 L370.3 157.3 L371.5 160.7 L372.7 158.4 L373.9 158.9 L375.0 158.3 L376.2 157.3 L377.3 157.1 L378.5 158.3 L379.4 156.6 L380.3 158.5 L381.2 156.2 L382.1 157.0 L383.0 156.9 L384.0 157.9 L384.9 160.0 L385.8 159.5 L386.7 157.3 L387.6 157.5 L388.5 156.9 L389.4 155.8 L390.4 156.2 L391.4 155.3 L392.3 154.7 L393.3 152.2 L394.3 152.2 L395.5 152.5 L396.7 153.4 L397.6 152.4 L398.5 153.3 L399.4 153.0 L400.3 151.0 L401.3 149.3 L402.3 148.8 L403.3 148.3 L404.2 147.7 L405.2 147.9 L406.4 149.4 L407.6 151.0 L408.5 152.6 L409.4 153.6 L410.4 154.8 L411.3 157.0 L412.2 156.0 L413.1 155.1 L414.0 155.0 L414.9 154.0 L415.8 156.1 L416.7 156.1 L417.6 156.3 L418.5 157.0 L419.5 156.8 L420.4 156.4 L421.3 153.9 L422.2 154.6 L423.4 155.2 L424.6 153.4 L425.8 150.2 L427.0 146.1 L428.3 149.7 L429.5 151.0 L430.7 150.7 L431.9 148.5 L432.8 150.3 L433.7 152.8 L434.7 151.1 L435.7 148.8 L436.7 148.5 L437.7 148.6 L438.6 146.6 L439.5 146.3 L440.4 147.3 L441.3 146.6 L442.2 146.6 L443.1 147.3 L444.0 147.9 L444.9 146.1 L445.8 145.5 L446.8 145.5 L447.7 146.1 L448.6 145.5 L449.5 146.9 L450.4 146.5 L451.3 148.5 L452.2 150.0 L453.1 149.5 L454.0 148.4 L455.0 149.8 L456.2 149.9 L457.4 151.6 L458.3 150.4 L459.2 149.7 L460.1 148.2 L461.0 148.5 L462.0 149.8 L463.0 150.5 L463.9 149.2 L464.9 149.5 L465.9 149.8 L466.8 148.6 L467.8 148.8 L468.8 149.6 L469.8 149.5 L470.7 150.4 L471.7 151.5 L472.7 149.6 L473.6 149.3 L474.6 152.2 L475.6 151.0 L476.5 151.4 L477.4 150.5 L478.3 152.0 L479.2 152.2 L480.2 150.6 L481.2 152.0 L482.1 153.3 L483.1 152.8 L484.1 151.6 L485.0 152.9 L485.9 152.4 L486.8 153.5 L487.7 154.6 L488.9 149.9 L490.0 146.1 L491.2 151.5 L492.3 156.1 L493.5 150.7 L494.7 145.2 L495.9 140.8 L497.1 135.5 L498.0 140.7 L499.0 146.4 L499.9 148.0 L500.8 151.3 L502.0 151.0 L503.2 148.8 L504.1 150.9 L505.0 151.1 L505.9 151.6 L506.8 151.3 L507.8 151.6 L508.7 150.8 L509.6 148.6 L510.5 148.8 L511.4 148.9 L512.3 148.4 L513.2 147.4 L514.1 148.8 L515.1 148.6 L516.1 150.6 L517.2 152.5 L518.1 154.2 L519.0 157.3 L520.2 155.5 L521.4 152.5 L522.6 155.4 L523.8 155.5 L524.7 154.9 L525.7 155.9 L526.6 155.6 L527.5 153.7 L528.4 154.8 L529.3 152.7 L530.2 151.9 L531.1 152.5 L532.0 151.4 L532.9 151.0 L533.8 150.7 L534.8 151.3 L535.7 151.5 L536.6 152.2 L537.5 151.8 L538.4 150.7 L539.3 150.4 L540.2 150.8 L541.1 151.1 L542.0 150.0 L542.9 149.3 L543.9 151.4 L544.8 152.6 L545.7 151.9 L546.6 152.6 L547.5 152.3 L548.4 151.3 L549.3 151.3 L550.3 149.5 L551.3 150.5 L552.4 148.8 L553.6 149.8 L554.8 151.9 L555.8 150.3 L556.8 148.5 L557.8 145.8 L558.7 144.9 L559.6 144.3 L560.5 145.3 L561.5 143.4 L562.5 143.6 L563.5 141.6 L564.5 142.2 L565.5 141.6 L566.5 142.3 L567.5 144.0 L568.4 145.8 L569.3 146.1 L570.3 144.7 L571.2 146.4 L572.1 147.8 L573.0 148.8 L573.9 148.2 L574.8 148.2 L576.0 145.7 L577.2 144.0 L578.1 142.9 L579.1 140.4 L580.0 138.9 L580.9 139.1 L582.1 136.2 L583.3 131.8 L584.2 131.4 L585.1 130.1 L586.0 130.4 L586.9 128.2 L587.9 127.4 L588.8 128.1 L589.7 127.4 L590.6 125.8 L591.5 124.6 L592.4 124.4 L593.3 124.2 L594.2 124.6 L595.1 122.9 L596.0 123.0 L597.0 121.1 L597.9 120.9 L598.8 121.0 L599.7 120.4 L600.6 123.1 L601.5 122.1 L602.7 120.9 L603.9 120.4 L605.0 119.7 L606.2 121.7 L607.3 123.3 L608.3 124.3 L609.2 122.8 L610.2 124.1 L611.2 122.8 L612.1 122.6 L613.0 121.4 L614.0 120.0 L614.9 117.1 L615.8 117.2 L616.7 117.9 L617.6 118.1 L618.5 118.4 L619.4 120.8 L620.3 119.5 L621.2 116.7 L622.1 115.3 L623.1 113.5 L624.0 114.1 L624.9 113.4 L625.8 112.6 L626.7 112.9 L627.7 113.5 L628.6 114.1 L629.6 115.2 L630.6 113.7 L631.6 115.4 L632.5 115.1 L633.4 113.7 L634.3 113.3 L635.2 113.5 L636.1 112.4 L637.0 110.5 L637.9 109.1 L638.8 107.5 L639.7 107.0 L640.7 106.3 L641.6 103.7 L642.5 102.6 L643.4 101.7 L644.3 100.2 L645.2 99.0 L646.1 97.8 L647.3 96.5 L648.5 94.1 L649.5 94.7 L650.4 95.7 L651.3 96.3 L652.2 97.2 L653.1 98.9 L654.0 98.7 L654.9 99.7 L655.8 99.0 L657.0 101.8 L658.3 102.0 L659.2 100.2 L660.1 100.1 L661.0 100.2 L661.9 97.8 L663.1 97.9 L664.3 95.9 L665.2 95.6 L666.1 96.3 L667.1 98.0 L668.0 99.0 L668.9 97.2 L669.8 97.3 L670.7 96.3 L671.6 97.2 L672.5 97.5 L673.4 97.7 L674.3 97.9 L675.2 96.6 L676.5 94.6 L677.7 94.7 L678.9 99.6 L680.1 103.8 L681.3 108.9 L682.5 113.5 L683.7 109.4 L685.0 106.3 L686.2 104.7 L687.4 100.8 L688.3 101.9 L689.2 99.4 L690.1 101.2 L691.0 99.6 L692.2 97.5 L693.4 95.9 L694.4 95.5 L695.3 96.5 L696.2 95.6 L697.1 94.1 L698.0 93.7 L698.9 95.1 L699.8 96.0 L700.7 96.6 L701.9 93.3 L703.2 91.1 L704.4 88.1 L705.6 86.8 L706.8 85.1 L708.0 84.4 L709.2 87.2 L710.4 88.7 L711.3 94.3 L712.3 101.4 L713.2 97.8 L714.1 94.1 L715.3 94.3 L716.5 94.7 L717.7 93.1 L718.9 93.8 L720.0 94.1 L721.2 94.8 L722.3 94.7 L723.3 95.8 L724.4 95.5 L725.5 99.4 L726.5 99.0 L727.7 98.6 L729.0 96.6 L730.2 96.8 L731.4 94.1 L732.6 94.8 L733.8 97.8 L734.8 96.3 L735.8 94.8 L736.8 95.3 L737.9 96.8 L738.9 95.9 L739.9 97.2 L741.1 96.7 L742.3 98.4 L743.5 100.9 L744.7 103.8 L745.9 107.5 L747.2 109.9 L748.1 106.7 L749.0 102.6 L750.2 100.1 L751.4 99.0 L752.6 98.2 L753.7 99.6 L754.2 87.5 L755.3 89.3 L756.4 88.9 L757.5 89.3 L758.4 89.4 L759.3 87.1 L760.2 86.6 L761.1 87.5 L762.3 88.3 L763.5 88.1 L764.8 87.2 L766.0 86.8 L767.0 86.8 L768.0 90.6 L769.0 90.5 L770.0 90.5 L771.0 90.6 L772.0 89.3 L773.1 86.4 L774.1 87.1 L775.1 84.4 L776.3 83.7 L777.5 85.6 L778.4 84.3 L779.3 80.8 L780.4 78.2 L781.5 75.9 L782.8 77.9 L784.2 80.8 L785.1 84.2 L786.0 87.5 L787.0 87.5 L788.0 84.3 L789.0 83.8 L790.2 81.8 L791.5 82.0 L792.5 82.3 L793.5 81.6 L794.5 82.6 L795.4 80.7 L796.3 80.1 L797.2 79.0 L798.1 79.6 L799.0 80.5 L800.0 83.2 L800.9 89.0 L801.8 95.3 L802.6 100.8 L804.2 89.3 L805.2 88.5 L806.2 89.6 L807.2 88.7 L808.1 87.6 L809.1 87.8 L810.0 86.3 L810.9 86.8 L811.9 86.8 L812.9 86.2 L813.9 88.1 L815.1 87.0 L816.3 87.5 L817.2 88.7 L818.2 92.9 L819.1 97.5 L820.0 101.4 L821.2 100.3 L822.4 99.0 L823.6 102.2 L824.8 106.3 L826.0 104.1 L827.3 102.0 L828.5 104.8 L829.7 105.0 L830.9 108.7 L832.1 113.5 L833.3 106.3 L835.0 108.7 L836.4 105.0 L837.6 113.5 L838.8 122.0 L839.7 126.8 L840.7 130.5 L841.9 140.8" fill="none" stroke="#22e622" stroke-width="1.45" stroke-linejoin="round"/></svg>
<div class="t" style="left:263.4px;top:176.7px;font-size:6.45px;color:#fff">15 Dec 2025</div>
<div class="t" style="left:307.2px;top:176.7px;font-size:6.45px;color:#fff">15 Dec 18:15</div>
<div class="t" style="left:351.0px;top:176.7px;font-size:6.45px;color:#fff">16 Dec 11:15</div>
<div class="t" style="left:394.8px;top:176.7px;font-size:6.45px;color:#fff">17 Dec 04:15</div>
<div class="t" style="left:438.6px;top:176.7px;font-size:6.45px;color:#fff">17 Dec 20:15</div>
<div class="t" style="left:482.4px;top:176.7px;font-size:6.45px;color:#fff">18 Dec 13:15</div>
<div class="t" style="left:526.2px;top:176.7px;font-size:6.45px;color:#fff">19 Dec 06:15</div>
<div class="t" style="left:570.0px;top:176.7px;font-size:6.45px;color:#fff">19 Dec 22:15</div>
<div class="t" style="left:613.8px;top:176.7px;font-size:6.45px;color:#fff">22 Dec 15:15</div>
<div class="t" style="left:657.6px;top:176.7px;font-size:6.45px;color:#fff">23 Dec 08:15</div>
<div class="t" style="left:701.4px;top:176.7px;font-size:6.45px;color:#fff">24 Dec 01:15</div>
<div class="t" style="left:745.2px;top:176.7px;font-size:6.45px;color:#fff">24 Dec 17:15</div>
<div class="t" style="left:789.0px;top:176.7px;font-size:6.45px;color:#fff">26 Dec 21:00</div>
<div class="t" style="left:832.8px;top:176.7px;font-size:6.45px;color:#fff">29 Dec 14:00</div>
<div class="t" style="left:960.6px;top:77.9px;font-size:6.3px;color:#fff">4537.10</div>
<div class="t" style="left:960.6px;top:101.0px;font-size:6.3px;color:#fff">4468.85</div>
<div class="t" style="left:960.6px;top:122.9px;font-size:6.3px;color:#fff">4402.55</div>
<div class="t" style="left:960.6px;top:146.2px;font-size:6.3px;color:#fff">4336.25</div>
<div class="t" style="left:960.6px;top:168.4px;font-size:6.3px;color:#fff">4269.95</div>
<div class="a" style="left:958px;top:132.2px;width:28.6px;height:6.2px;background:#fff"></div>
<div class="t" style="left:960.6px;top:133px;font-size:6.3px;color:#000">4372.15</div>
<div class="a" style="left:958px;top:138.4px;width:28.6px;height:6.6px;background:#e81018"></div>
<div class="t" style="left:960.6px;top:139.4px;font-size:6.3px;color:#7a0000">4353.50</div>
<div class="t" style="left:911.2px;top:73.8px;font-size:6.5px;font-weight:bold;color:#f4f4f4;letter-spacing:-0.25px">净值平仓2.0</div>
<svg style="left:946px;top:72.6px" width="8.4" height="8.4" viewBox="0 0 10 10"><circle cx="5" cy="5" r="4.2" fill="none" stroke="#e8e8e8" stroke-width="1"/><circle cx="3.5" cy="4" r="0.7" fill="#e8e8e8"/><circle cx="6.5" cy="4" r="0.7" fill="#e8e8e8"/><path d="M3.2 7.3c1-1.2 2.6-1.2 3.6 0" stroke="#e8e8e8" stroke-width="0.8" fill="none"/></svg>
<div class="t r" style="left:860px;top:83.1px;width:46px;font-size:8px;font-weight:500;color:#9cc0e6">开盘价</div>
<div class="t r" style="left:895px;top:83.5px;width:49.8px;font-size:7.7px;font-weight:bold;color:#f5a81a;font-family:'DejaVu Sans',sans-serif">4538.98</div>
<div class="t r" style="left:860px;top:93.3px;width:46px;font-size:8px;font-weight:500;color:#9cc0e6">最高价</div>
<div class="t r" style="left:895px;top:93.7px;width:49.8px;font-size:7.7px;font-weight:bold;color:#f5a81a;font-family:'DejaVu Sans',sans-serif">4549.42</div>
<div class="t r" style="left:860px;top:103.7px;width:46px;font-size:8px;font-weight:500;color:#9cc0e6">最低价</div>
<div class="t r" style="left:895px;top:104.1px;width:49.8px;font-size:7.7px;font-weight:bold;color:#f5a81a;font-family:'DejaVu Sans',sans-serif">4356.59</div>
<div class="t r" style="left:860px;top:114.1px;width:46px;font-size:8px;font-weight:500;color:#9cc0e6">交易点差</div>
<div class="t r" style="left:895px;top:114.5px;width:49.8px;font-size:7.7px;font-weight:bold;color:#b6f03c;font-family:'DejaVu Sans',sans-serif">42</div>
<div class="t r" style="left:860px;top:124.2px;width:46px;font-size:8px;font-weight:500;color:#9cc0e6">日均波幅</div>
<div class="t r" style="left:895px;top:124.6px;width:49.8px;font-size:7.7px;font-weight:bold;color:#b6f03c;font-family:'DejaVu Sans',sans-serif">6252</div>
<div class="t r" style="left:860px;top:134.5px;width:46px;font-size:8px;font-weight:500;color:#9cc0e6">当日波幅</div>
<div class="t r" style="left:895px;top:134.9px;width:49.8px;font-size:7.7px;font-weight:bold;color:#b6f03c;font-family:'DejaVu Sans',sans-serif">19283</div>
<div class="t r" style="left:860px;top:145.2px;width:46px;font-size:8px;font-weight:500;color:#9cc0e6">开盘跳空</div>
<div class="t r" style="left:860.6px;top:145.4px;width:46px;font-size:8px;font-weight:500;color:#9cc0e6;opacity:.7">隔夜利息</div>
<div class="t r" style="left:895px;top:145.6px;width:49.8px;font-size:7.7px;font-weight:bold;color:#f58a1a;font-family:'DejaVu Sans',sans-serif">-16683</div>
<div class="t r" style="left:895px;top:145.6px;width:49.8px;font-size:7.7px;font-weight:bold;color:#b6f03c;font-family:'DejaVu Sans',sans-serif;opacity:.75">10600</div>
<div class="t" style="left:889.4px;top:155.6px;font-size:7.6px;color:#94b8dc">USD</div>
<div class="t" style="left:916px;top:155.6px;font-size:7px;font-weight:bold;color:#e8601a">Ш</div>
<div class="t" id="bigp" style="left:891.4px;top:159.4px;font-size:14.2px;color:#f0a820;letter-spacing:0.25px">4372.15</div>
<div class="a" style="left:259.5px;top:186.6px;width:728.8px;height:1px;background:#fdfdfd"></div>
<div class="a" style="left:262px;top:187.6px;width:726px;height:1px;background:#8a8a8a"></div>
<div class="a" style="left:261.6px;top:187.6px;width:1px;height:13.6px;background:#b0b0b0"></div>
<div class="a" style="left:398.5px;top:187.4px;width:68.4px;height:14.4px;background:#fff;border:1px solid #333;border-top:1px solid #fff;border-radius:0 0 1.5px 1.5px"></div>
<div class="t" style="left:271.5px;top:191.6px;font-size:8.5px;color:#777">XAUUSD,Daily</div>
<div class="t" style="left:343.0px;top:191.6px;font-size:8.5px;color:#777">XAUUSD,H1</div>
<div class="t" style="left:404.8px;top:191.6px;font-size:8.5px;color:#111">XAUUSD,M15</div>
<div class="t" style="left:474.2px;top:191.6px;font-size:8.5px;color:#777">XAUUSD,Daily</div>
<div class="t" style="left:545.6px;top:191.6px;font-size:8.5px;color:#777">EURUSD,M15</div>
<div class="a" style="left:335.4px;top:189.6px;width:1px;height:10px;background:#8a8a8a"></div>
<div class="a" style="left:537.4px;top:189.6px;width:1px;height:10px;background:#8a8a8a"></div>
<div class="a" style="left:606.4px;top:189.6px;width:1px;height:10px;background:#8a8a8a"></div>
<svg style="left:965px;top:191.6px" width="18" height="6" viewBox="0 0 18 6"><path d="M3.5 0.5v5L0.5 3z" fill="#9a9a9a"/><path d="M14.5 0.5v5l3-2.5z" fill="#9a9a9a"/></svg>
<div class="a" style="left:3px;top:203px;width:10px;height:369px;background:#f0f0f0"></div>
<div class="a" style="left:12.4px;top:205.2px;width:975.6px;height:349.7px;background:#fff;border-left:1px solid #b4b4b4;border-top:1px solid #c8c8c8"></div>
<div class="a" style="left:13.0px;top:206px;width:962.6px;height:13.4px;background:#fbfbfb;border-bottom:1px solid #d4d4d4"></div>
<div class="t" style="left:17.4px;top:208.8px;font-size:8.2px;color:#222">订单</div>
<div class="t r" style="left:181.0px;top:208.8px;width:60px;font-size:8.2px;color:#222">时间</div>
<div class="t r" style="left:245.0px;top:208.8px;width:60px;font-size:8.2px;color:#222">类型</div>
<div class="t r" style="left:296.8px;top:208.8px;width:60px;font-size:8.2px;color:#222">手数</div>
<div class="t r" style="left:361.8px;top:208.8px;width:60px;font-size:8.2px;color:#222">交易品种</div>
<div class="t r" style="left:428.7px;top:208.8px;width:60px;font-size:8.2px;color:#222">价格</div>
<div class="t r" style="left:495.0px;top:208.8px;width:60px;font-size:8.2px;color:#222">止损</div>
<div class="t r" style="left:560.6px;top:208.8px;width:60px;font-size:8.2px;color:#222">止盈</div>
<div class="t r" style="left:691.4px;top:208.8px;width:60px;font-size:8.2px;color:#222">时间</div>
<div class="t r" style="left:770.6px;top:208.8px;width:60px;font-size:8.2px;color:#222">价格</div>
<div class="t r" style="left:836.6px;top:208.8px;width:60px;font-size:8.2px;color:#222">库存费</div>
<div class="t r" style="left:910.6px;top:208.8px;width:60px;font-size:8.2px;color:#222">获利</div>
<div class="t" style="left:759.4px;top:209.8px;font-size:6.6px;color:#999">/</div>
<div class="a" style="left:13.0px;top:219.60px;width:962.6px;height:14.45px;background:#ffffff"></div>
<svg style="left:15.8px;top:222.5px" width="9" height="10" viewBox="0 0 9 10"><rect x="0.6" y="0.6" width="7.6" height="8.6" rx="1" fill="#f4fbf4" stroke="#8a9a8a" stroke-width="0.8"/><path d="M4.4 2.4l2.4 2.5-2.4 2.5-2.4-2.5z" fill="#2ea02e"/><circle cx="4.4" cy="4.9" r="0.8" fill="#d8f4d8"/></svg>
<div class="t" style="left:28.8px;top:222.60px;font-size:8.55px;color:#222">52144232</div>
<div class="t r" style="left:120.6px;top:222.60px;width:120px;font-size:8.55px;color:#222;letter-spacing:-0.06px">2025.12.15 10:23:53</div>
<div class="t r" style="left:186.0px;top:222.60px;width:120px;font-size:8.55px;color:#222">balance</div>
<div class="t r" style="left:697.0px;top:222.60px;width:200px;font-size:8.55px;color:#222;letter-spacing:0.21px">KH-(2b0cb60b-1961-4114-bea2-)-6</div>
<div class="t r" style="left:851.6px;top:222.60px;width:120px;font-size:8.55px;color:#222">3 004.45</div>
<div class="a" style="left:13.0px;top:234.00px;width:962.6px;height:14.45px;background:#ebebeb"></div>
<svg style="left:15.6px;top:236.7px" width="10" height="11" viewBox="0 0 10 11"><path d="M0.8 0.6h4.8l2.4 2.4v6.6h-7.2z" fill="#fff" stroke="#7d8ea8" stroke-width="0.8"/><path d="M5.6 0.6v2.4h2.4" fill="none" stroke="#7d8ea8" stroke-width="0.6"/><circle cx="7.2" cy="8.2" r="2.5" fill="#2a78d8"/><circle cx="6.5" cy="7.4" r="0.8" fill="#fff" fill-opacity="0.5"/></svg>
<div class="t" style="left:28.8px;top:237.00px;font-size:8.55px;color:#222">52144238</div>
<div class="t r" style="left:120.6px;top:237.00px;width:120px;font-size:8.55px;color:#222;letter-spacing:-0.06px">2025.12.15 10:24:10</div>
<div class="t r" style="left:186.0px;top:237.00px;width:120px;font-size:8.55px;color:#222">buy limit</div>
<div class="t r" style="left:238.0px;top:237.00px;width:120px;font-size:8.55px;color:#222">0.02</div>
<div class="t r" style="left:303.6px;top:237.00px;width:120px;font-size:8.55px;color:#222">xauusd</div>
<div class="t r" style="left:370.0px;top:237.00px;width:120px;font-size:8.55px;color:#222">4300.00</div>
<div class="t r" style="left:435.8px;top:237.00px;width:120px;font-size:8.55px;color:#222">0.00</div>
<div class="t r" style="left:501.4px;top:237.00px;width:120px;font-size:8.55px;color:#222">0.00</div>
<div class="t r" style="left:565.8px;top:237.00px;width:200px;font-size:8.55px;color:#222;letter-spacing:-0.06px">2025.12.15 10:24:26</div>
<div class="t r" style="left:711.4px;top:237.00px;width:120px;font-size:8.55px;color:#222">4343.33</div>
<div class="a" style="left:13.0px;top:248.40px;width:962.6px;height:14.45px;background:#ffffff"></div>
<div class="a" style="left:559.4px;top:248.90px;width:63.2px;height:13.50px;background:#5fe65f"></div>
<svg style="left:15.6px;top:251.1px" width="10" height="11" viewBox="0 0 10 11"><path d="M0.8 0.6h4.8l2.4 2.4v6.6h-7.2z" fill="#fff" stroke="#7d8ea8" stroke-width="0.8"/><path d="M5.6 0.6v2.4h2.4" fill="none" stroke="#7d8ea8" stroke-width="0.6"/><circle cx="7.2" cy="8.2" r="2.5" fill="#d8401a"/><circle cx="6.5" cy="7.4" r="0.8" fill="#fff" fill-opacity="0.5"/></svg>
<div class="t" style="left:28.8px;top:251.40px;font-size:8.55px;color:#222">52144248</div>
<div class="t r" style="left:120.6px;top:251.40px;width:120px;font-size:8.55px;color:#222;letter-spacing:-0.06px">2025.12.15 10:24:47</div>
<div class="t r" style="left:186.0px;top:251.40px;width:120px;font-size:8.55px;color:#222">sell</div>
<div class="t r" style="left:238.0px;top:251.40px;width:120px;font-size:8.55px;color:#222">0.20</div>
<div class="t r" style="left:303.6px;top:251.40px;width:120px;font-size:8.55px;color:#222">xauusd</div>
<div class="t r" style="left:370.0px;top:251.40px;width:120px;font-size:8.55px;color:#222">4342.37</div>
<div class="t r" style="left:435.8px;top:251.40px;width:120px;font-size:8.55px;color:#222">4359.63</div>
<div class="t r" style="left:501.4px;top:251.40px;width:120px;font-size:8.55px;color:#083808">4287.00</div>
<div class="t r" style="left:565.8px;top:251.40px;width:200px;font-size:8.55px;color:#222;letter-spacing:-0.06px">2025.12.15 18:37:30</div>
<div class="t r" style="left:711.4px;top:251.40px;width:120px;font-size:8.55px;color:#222">4287.00</div>
<div class="t r" style="left:777.6px;top:251.40px;width:120px;font-size:8.55px;color:#222">0.00</div>
<div class="t r" style="left:851.6px;top:251.40px;width:120px;font-size:8.55px;color:#222">1 107.40</div>
<div class="a" style="left:13.0px;top:262.80px;width:962.6px;height:14.45px;background:#ebebeb"></div>
<div class="a" style="left:559.4px;top:263.30px;width:63.2px;height:13.50px;background:#5fe65f"></div>
<svg style="left:15.6px;top:265.5px" width="10" height="11" viewBox="0 0 10 11"><path d="M0.8 0.6h4.8l2.4 2.4v6.6h-7.2z" fill="#fff" stroke="#7d8ea8" stroke-width="0.8"/><path d="M5.6 0.6v2.4h2.4" fill="none" stroke="#7d8ea8" stroke-width="0.6"/><circle cx="7.2" cy="8.2" r="2.5" fill="#d8401a"/><circle cx="6.5" cy="7.4" r="0.8" fill="#fff" fill-opacity="0.5"/></svg>
<div class="t" style="left:28.8px;top:265.80px;font-size:8.55px;color:#222">52144250</div>
<div class="t r" style="left:120.6px;top:265.80px;width:120px;font-size:8.55px;color:#222;letter-spacing:-0.06px">2025.12.15 10:24:55</div>
<div class="t r" style="left:186.0px;top:265.80px;width:120px;font-size:8.55px;color:#222">sell</div>
<div class="t r" style="left:238.0px;top:265.80px;width:120px;font-size:8.55px;color:#222">0.20</div>
<div class="t r" style="left:303.6px;top:265.80px;width:120px;font-size:8.55px;color:#222">xauusd</div>
<div class="t r" style="left:370.0px;top:265.80px;width:120px;font-size:8.55px;color:#222">4342.66</div>
<div class="t r" style="left:435.8px;top:265.80px;width:120px;font-size:8.55px;color:#222">4359.63</div>
<div class="t r" style="left:501.4px;top:265.80px;width:120px;font-size:8.55px;color:#083808">4287.00</div>
<div class="t r" style="left:565.8px;top:265.80px;width:200px;font-size:8.55px;color:#222;letter-spacing:-0.06px">2025.12.15 18:37:30</div>
<div class="t r" style="left:711.4px;top:265.80px;width:120px;font-size:8.55px;color:#222">4287.00</div>
<div class="t r" style="left:777.6px;top:265.80px;width:120px;font-size:8.55px;color:#222">0.00</div>
<div class="t r" style="left:851.6px;top:265.80px;width:120px;font-size:8.55px;color:#222">1 113.20</div>
<div class="a" style="left:13.0px;top:277.20px;width:962.6px;height:14.45px;background:#ffffff"></div>
<div class="a" style="left:559.4px;top:277.70px;width:63.2px;height:13.50px;background:#5fe65f"></div>
<svg style="left:15.6px;top:279.9px" width="10" height="11" viewBox="0 0 10 11"><path d="M0.8 0.6h4.8l2.4 2.4v6.6h-7.2z" fill="#fff" stroke="#7d8ea8" stroke-width="0.8"/><path d="M5.6 0.6v2.4h2.4" fill="none" stroke="#7d8ea8" stroke-width="0.6"/><circle cx="7.2" cy="8.2" r="2.5" fill="#d8401a"/><circle cx="6.5" cy="7.4" r="0.8" fill="#fff" fill-opacity="0.5"/></svg>
<div class="t" style="left:28.8px;top:280.20px;font-size:8.55px;color:#222">52144251</div>
<div class="t r" style="left:120.6px;top:280.20px;width:120px;font-size:8.55px;color:#222;letter-spacing:-0.06px">2025.12.15 10:25:00</div>
<div class="t r" style="left:186.0px;top:280.20px;width:120px;font-size:8.55px;color:#222">sell</div>
<div class="t r" style="left:238.0px;top:280.20px;width:120px;font-size:8.55px;color:#222">0.20</div>
<div class="t r" style="left:303.6px;top:280.20px;width:120px;font-size:8.55px;color:#222">xauusd</div>
<div class="t r" style="left:370.0px;top:280.20px;width:120px;font-size:8.55px;color:#222">4342.66</div>
<div class="t r" style="left:435.8px;top:280.20px;width:120px;font-size:8.55px;color:#222">4359.63</div>
<div class="t r" style="left:501.4px;top:280.20px;width:120px;font-size:8.55px;color:#083808">4287.00</div>
<div class="t r" style="left:565.8px;top:280.20px;width:200px;font-size:8.55px;color:#222;letter-spacing:-0.06px">2025.12.15 18:37:30</div>
<div class="t r" style="left:711.4px;top:280.20px;width:120px;font-size:8.55px;color:#222">4287.00</div>
<div class="t r" style="left:777.6px;top:280.20px;width:120px;font-size:8.55px;color:#222">0.00</div>
<div class="t r" style="left:851.6px;top:280.20px;width:120px;font-size:8.55px;color:#222">1 113.20</div>
<div class="a" style="left:13.0px;top:291.60px;width:962.6px;height:14.45px;background:#ebebeb"></div>
<div class="a" style="left:559.4px;top:292.10px;width:63.2px;height:13.50px;background:#5fe65f"></div>
<svg style="left:15.6px;top:294.3px" width="10" height="11" viewBox="0 0 10 11"><path d="M0.8 0.6h4.8l2.4 2.4v6.6h-7.2z" fill="#fff" stroke="#7d8ea8" stroke-width="0.8"/><path d="M5.6 0.6v2.4h2.4" fill="none" stroke="#7d8ea8" stroke-width="0.6"/><circle cx="7.2" cy="8.2" r="2.5" fill="#d8401a"/><circle cx="6.5" cy="7.4" r="0.8" fill="#fff" fill-opacity="0.5"/></svg>
<div class="t" style="left:28.8px;top:294.60px;font-size:8.55px;color:#222">52144257</div>
<div class="t r" style="left:120.6px;top:294.60px;width:120px;font-size:8.55px;color:#222;letter-spacing:-0.06px">2025.12.15 10:25:12</div>
<div class="t r" style="left:186.0px;top:294.60px;width:120px;font-size:8.55px;color:#222">sell</div>
<div class="t r" style="left:238.0px;top:294.60px;width:120px;font-size:8.55px;color:#222">0.20</div>
<div class="t r" style="left:303.6px;top:294.60px;width:120px;font-size:8.55px;color:#222">xauusd</div>
<div class="t r" style="left:370.0px;top:294.60px;width:120px;font-size:8.55px;color:#222">4343.43</div>
<div class="t r" style="left:435.8px;top:294.60px;width:120px;font-size:8.55px;color:#222">4359.63</div>
<div class="t r" style="left:501.4px;top:294.60px;width:120px;font-size:8.55px;color:#083808">4287.00</div>
<div class="t r" style="left:565.8px;top:294.60px;width:200px;font-size:8.55px;color:#222;letter-spacing:-0.06px">2025.12.15 18:37:30</div>
<div class="t r" style="left:711.4px;top:294.60px;width:120px;font-size:8.55px;color:#222">4287.00</div>
<div class="t r" style="left:777.6px;top:294.60px;width:120px;font-size:8.55px;color:#222">0.00</div>
<div class="t r" style="left:851.6px;top:294.60px;width:120px;font-size:8.55px;color:#222">1 128.60</div>
<div class="a" style="left:13.0px;top:306.00px;width:962.6px;height:14.45px;background:#ffffff"></div>
<div class="a" style="left:559.4px;top:306.50px;width:63.2px;height:13.50px;background:#5fe65f"></div>
<svg style="left:15.6px;top:308.7px" width="10" height="11" viewBox="0 0 10 11"><path d="M0.8 0.6h4.8l2.4 2.4v6.6h-7.2z" fill="#fff" stroke="#7d8ea8" stroke-width="0.8"/><path d="M5.6 0.6v2.4h2.4" fill="none" stroke="#7d8ea8" stroke-width="0.6"/><circle cx="7.2" cy="8.2" r="2.5" fill="#d8401a"/><circle cx="6.5" cy="7.4" r="0.8" fill="#fff" fill-opacity="0.5"/></svg>
<div class="t" style="left:28.8px;top:309.00px;font-size:8.55px;color:#222">52144267</div>
<div class="t r" style="left:120.6px;top:309.00px;width:120px;font-size:8.55px;color:#222;letter-spacing:-0.06px">2025.12.15 10:25:25</div>
<div class="t r" style="left:186.0px;top:309.00px;width:120px;font-size:8.55px;color:#222">sell</div>
<div class="t r" style="left:238.0px;top:309.00px;width:120px;font-size:8.55px;color:#222">0.20</div>
<div class="t r" style="left:303.6px;top:309.00px;width:120px;font-size:8.55px;color:#222">xauusd</div>
<div class="t r" style="left:370.0px;top:309.00px;width:120px;font-size:8.55px;color:#222">4343.51</div>
<div class="t r" style="left:435.8px;top:309.00px;width:120px;font-size:8.55px;color:#222">4359.63</div>
<div class="t r" style="left:501.4px;top:309.00px;width:120px;font-size:8.55px;color:#083808">4287.00</div>
<div class="t r" style="left:565.8px;top:309.00px;width:200px;font-size:8.55px;color:#222;letter-spacing:-0.06px">2025.12.15 18:37:30</div>
<div class="t r" style="left:711.4px;top:309.00px;width:120px;font-size:8.55px;color:#222">4287.00</div>
<div class="t r" style="left:777.6px;top:309.00px;width:120px;font-size:8.55px;color:#222">0.00</div>
<div class="t r" style="left:851.6px;top:309.00px;width:120px;font-size:8.55px;color:#222">1 130.20</div>
<div class="a" style="left:13.0px;top:320.40px;width:962.6px;height:14.45px;background:#ebebeb"></div>
<div class="a" style="left:559.4px;top:320.90px;width:63.2px;height:13.50px;background:#5fe65f"></div>
<svg style="left:15.6px;top:323.1px" width="10" height="11" viewBox="0 0 10 11"><path d="M0.8 0.6h4.8l2.4 2.4v6.6h-7.2z" fill="#fff" stroke="#7d8ea8" stroke-width="0.8"/><path d="M5.6 0.6v2.4h2.4" fill="none" stroke="#7d8ea8" stroke-width="0.6"/><circle cx="7.2" cy="8.2" r="2.5" fill="#d8401a"/><circle cx="6.5" cy="7.4" r="0.8" fill="#fff" fill-opacity="0.5"/></svg>
<div class="t" style="left:28.8px;top:323.40px;font-size:8.55px;color:#222">52144285</div>
<div class="t r" style="left:120.6px;top:323.40px;width:120px;font-size:8.55px;color:#222;letter-spacing:-0.06px">2025.12.15 10:25:54</div>
<div class="t r" style="left:186.0px;top:323.40px;width:120px;font-size:8.55px;color:#222">sell</div>
<div class="t r" style="left:238.0px;top:323.40px;width:120px;font-size:8.55px;color:#222">0.20</div>
<div class="t r" style="left:303.6px;top:323.40px;width:120px;font-size:8.55px;color:#222">xauusd</div>
<div class="t r" style="left:370.0px;top:323.40px;width:120px;font-size:8.55px;color:#222">4343.98</div>
<div class="t r" style="left:435.8px;top:323.40px;width:120px;font-size:8.55px;color:#222">4359.63</div>
<div class="t r" style="left:501.4px;top:323.40px;width:120px;font-size:8.55px;color:#083808">4287.00</div>
<div class="t r" style="left:565.8px;top:323.40px;width:200px;font-size:8.55px;color:#222;letter-spacing:-0.06px">2025.12.15 18:37:30</div>
<div class="t r" style="left:711.4px;top:323.40px;width:120px;font-size:8.55px;color:#222">4287.00</div>
<div class="t r" style="left:777.6px;top:323.40px;width:120px;font-size:8.55px;color:#222">0.00</div>
<div class="t r" style="left:851.6px;top:323.40px;width:120px;font-size:8.55px;color:#222">1 139.60</div>
<div class="a" style="left:13.0px;top:334.80px;width:962.6px;height:14.45px;background:#ffffff"></div>
<div class="a" style="left:559.4px;top:335.30px;width:63.2px;height:13.50px;background:#5fe65f"></div>
<svg style="left:15.6px;top:337.5px" width="10" height="11" viewBox="0 0 10 11"><path d="M0.8 0.6h4.8l2.4 2.4v6.6h-7.2z" fill="#fff" stroke="#7d8ea8" stroke-width="0.8"/><path d="M5.6 0.6v2.4h2.4" fill="none" stroke="#7d8ea8" stroke-width="0.6"/><circle cx="7.2" cy="8.2" r="2.5" fill="#d8401a"/><circle cx="6.5" cy="7.4" r="0.8" fill="#fff" fill-opacity="0.5"/></svg>
<div class="t" style="left:28.8px;top:337.80px;font-size:8.55px;color:#222">52144295</div>
<div class="t r" style="left:120.6px;top:337.80px;width:120px;font-size:8.55px;color:#222;letter-spacing:-0.06px">2025.12.15 10:26:13</div>
<div class="t r" style="left:186.0px;top:337.80px;width:120px;font-size:8.55px;color:#222">sell</div>
<div class="t r" style="left:238.0px;top:337.80px;width:120px;font-size:8.55px;color:#222">0.20</div>
<div class="t r" style="left:303.6px;top:337.80px;width:120px;font-size:8.55px;color:#222">xauusd</div>
<div class="t r" style="left:370.0px;top:337.80px;width:120px;font-size:8.55px;color:#222">4344.32</div>
<div class="t r" style="left:435.8px;top:337.80px;width:120px;font-size:8.55px;color:#222">4359.63</div>
<div class="t r" style="left:501.4px;top:337.80px;width:120px;font-size:8.55px;color:#083808">4287.00</div>
<div class="t r" style="left:565.8px;top:337.80px;width:200px;font-size:8.55px;color:#222;letter-spacing:-0.06px">2025.12.15 18:37:30</div>
<div class="t r" style="left:711.4px;top:337.80px;width:120px;font-size:8.55px;color:#222">4287.00</div>
<div class="t r" style="left:777.6px;top:337.80px;width:120px;font-size:8.55px;color:#222">0.00</div>
<div class="t r" style="left:851.6px;top:337.80px;width:120px;font-size:8.55px;color:#222">1 146.40</div>
<div class="a" style="left:13.0px;top:349.20px;width:962.6px;height:14.45px;background:#3393f6"></div>
<div class="a" style="left:559.4px;top:349.70px;width:63.2px;height:13.50px;background:#5fe65f"></div>
<svg style="left:15.6px;top:351.9px" width="10" height="11" viewBox="0 0 10 11"><path d="M0.8 0.6h4.8l2.4 2.4v6.6h-7.2z" fill="#fff" stroke="#7d8ea8" stroke-width="0.8"/><path d="M5.6 0.6v2.4h2.4" fill="none" stroke="#7d8ea8" stroke-width="0.6"/><circle cx="7.2" cy="8.2" r="2.5" fill="#d8401a"/><circle cx="6.5" cy="7.4" r="0.8" fill="#fff" fill-opacity="0.5"/></svg>
<div class="t" style="left:28.8px;top:352.20px;font-size:8.55px;color:#fff">52144299</div>
<div class="t r" style="left:120.6px;top:352.20px;width:120px;font-size:8.55px;color:#fff;letter-spacing:-0.06px">2025.12.15 10:26:28</div>
<div class="t r" style="left:186.0px;top:352.20px;width:120px;font-size:8.55px;color:#fff">sell</div>
<div class="t r" style="left:238.0px;top:352.20px;width:120px;font-size:8.55px;color:#fff">0.20</div>
<div class="t r" style="left:303.6px;top:352.20px;width:120px;font-size:8.55px;color:#fff">xauusd</div>
<div class="t r" style="left:370.0px;top:352.20px;width:120px;font-size:8.55px;color:#fff">4343.90</div>
<div class="t r" style="left:435.8px;top:352.20px;width:120px;font-size:8.55px;color:#fff">4359.63</div>
<div class="t r" style="left:501.4px;top:352.20px;width:120px;font-size:8.55px;color:#083808">4287.00</div>
<div class="t r" style="left:565.8px;top:352.20px;width:200px;font-size:8.55px;color:#fff;letter-spacing:-0.06px">2025.12.15 18:37:30</div>
<div class="t r" style="left:711.4px;top:352.20px;width:120px;font-size:8.55px;color:#fff">4287.00</div>
<div class="t r" style="left:777.6px;top:352.20px;width:120px;font-size:8.55px;color:#fff">0.00</div>
<div class="t r" style="left:851.6px;top:352.20px;width:120px;font-size:8.55px;color:#fff">1 138.00</div>
<div class="a" style="left:13.0px;top:363.60px;width:962.6px;height:14.45px;background:#ffffff"></div>
<div class="a" style="left:559.4px;top:364.10px;width:63.2px;height:13.50px;background:#5fe65f"></div>
<svg style="left:15.6px;top:366.3px" width="10" height="11" viewBox="0 0 10 11"><path d="M0.8 0.6h4.8l2.4 2.4v6.6h-7.2z" fill="#fff" stroke="#7d8ea8" stroke-width="0.8"/><path d="M5.6 0.6v2.4h2.4" fill="none" stroke="#7d8ea8" stroke-width="0.6"/><circle cx="7.2" cy="8.2" r="2.5" fill="#d8401a"/><circle cx="6.5" cy="7.4" r="0.8" fill="#fff" fill-opacity="0.5"/></svg>
<div class="t" style="left:28.8px;top:366.60px;font-size:8.55px;color:#222">52152219</div>
<div class="t r" style="left:120.6px;top:366.60px;width:120px;font-size:8.55px;color:#222;letter-spacing:-0.06px">2025.12.15 16:01:09</div>
<div class="t r" style="left:186.0px;top:366.60px;width:120px;font-size:8.55px;color:#222">sell</div>
<div class="t r" style="left:238.0px;top:366.60px;width:120px;font-size:8.55px;color:#222">0.20</div>
<div class="t r" style="left:303.6px;top:366.60px;width:120px;font-size:8.55px;color:#222">xauusd</div>
<div class="t r" style="left:370.0px;top:366.60px;width:120px;font-size:8.55px;color:#222">4334.10</div>
<div class="t r" style="left:435.8px;top:366.60px;width:120px;font-size:8.55px;color:#222">4359.63</div>
<div class="t r" style="left:501.4px;top:366.60px;width:120px;font-size:8.55px;color:#083808">4287.00</div>
<div class="t r" style="left:565.8px;top:366.60px;width:200px;font-size:8.55px;color:#222;letter-spacing:-0.06px">2025.12.15 18:37:30</div>
<div class="t r" style="left:711.4px;top:366.60px;width:120px;font-size:8.55px;color:#222">4287.00</div>
<div class="t r" style="left:777.6px;top:366.60px;width:120px;font-size:8.55px;color:#222">0.00</div>
<div class="t r" style="left:851.6px;top:366.60px;width:120px;font-size:8.55px;color:#222">942.00</div>
<div class="a" style="left:13.0px;top:378.00px;width:962.6px;height:14.45px;background:#ebebeb"></div>
<svg style="left:15.6px;top:380.7px" width="10" height="11" viewBox="0 0 10 11"><path d="M0.8 0.6h4.8l2.4 2.4v6.6h-7.2z" fill="#fff" stroke="#7d8ea8" stroke-width="0.8"/><path d="M5.6 0.6v2.4h2.4" fill="none" stroke="#7d8ea8" stroke-width="0.6"/><circle cx="7.2" cy="8.2" r="2.5" fill="#2a78d8"/><circle cx="6.5" cy="7.4" r="0.8" fill="#fff" fill-opacity="0.5"/></svg>
<div class="t" style="left:28.8px;top:381.00px;font-size:8.55px;color:#222">52188435</div>
<div class="t r" style="left:120.6px;top:381.00px;width:120px;font-size:8.55px;color:#222;letter-spacing:-0.06px">2025.12.16 02:29:30</div>
<div class="t r" style="left:186.0px;top:381.00px;width:120px;font-size:8.55px;color:#222">buy</div>
<div class="t r" style="left:238.0px;top:381.00px;width:120px;font-size:8.55px;color:#222">0.01</div>
<div class="t r" style="left:303.6px;top:381.00px;width:120px;font-size:8.55px;color:#222">xauusd</div>
<div class="t r" style="left:370.0px;top:381.00px;width:120px;font-size:8.55px;color:#222">4309.68</div>
<div class="t r" style="left:435.8px;top:381.00px;width:120px;font-size:8.55px;color:#222">0.00</div>
<div class="t r" style="left:501.4px;top:381.00px;width:120px;font-size:8.55px;color:#222">0.00</div>
<div class="t r" style="left:565.8px;top:381.00px;width:200px;font-size:8.55px;color:#222;letter-spacing:-0.06px">2025.12.16 02:31:36</div>
<div class="t r" style="left:711.4px;top:381.00px;width:120px;font-size:8.55px;color:#222">4308.69</div>
<div class="t r" style="left:777.6px;top:381.00px;width:120px;font-size:8.55px;color:#222">0.00</div>
<div class="t r" style="left:851.6px;top:381.00px;width:120px;font-size:8.55px;color:#222">-0.99</div>
<div class="a" style="left:13.0px;top:392.40px;width:962.6px;height:14.45px;background:#ffffff"></div>
<div class="a" style="left:559.4px;top:392.90px;width:63.2px;height:13.50px;background:#5fe65f"></div>
<svg style="left:15.6px;top:395.1px" width="10" height="11" viewBox="0 0 10 11"><path d="M0.8 0.6h4.8l2.4 2.4v6.6h-7.2z" fill="#fff" stroke="#7d8ea8" stroke-width="0.8"/><path d="M5.6 0.6v2.4h2.4" fill="none" stroke="#7d8ea8" stroke-width="0.6"/><circle cx="7.2" cy="8.2" r="2.5" fill="#2a78d8"/><circle cx="6.5" cy="7.4" r="0.8" fill="#fff" fill-opacity="0.5"/></svg>
<div class="t" style="left:28.8px;top:395.40px;font-size:8.55px;color:#222">52188612</div>
<div class="t r" style="left:120.6px;top:395.40px;width:120px;font-size:8.55px;color:#222;letter-spacing:-0.06px">2025.12.16 02:30:00</div>
<div class="t r" style="left:186.0px;top:395.40px;width:120px;font-size:8.55px;color:#222">buy</div>
<div class="t r" style="left:238.0px;top:395.40px;width:120px;font-size:8.55px;color:#222">0.30</div>
<div class="t r" style="left:303.6px;top:395.40px;width:120px;font-size:8.55px;color:#222">xauusd</div>
<div class="t r" style="left:370.0px;top:395.40px;width:120px;font-size:8.55px;color:#222">4309.79</div>
<div class="t r" style="left:435.8px;top:395.40px;width:120px;font-size:8.55px;color:#222">4265.68</div>
<div class="t r" style="left:501.4px;top:395.40px;width:120px;font-size:8.55px;color:#083808">4341.15</div>
<div class="t r" style="left:565.8px;top:395.40px;width:200px;font-size:8.55px;color:#222;letter-spacing:-0.06px">2025.12.17 07:48:10</div>
<div class="t r" style="left:711.4px;top:395.40px;width:120px;font-size:8.55px;color:#222">4341.15</div>
<div class="t r" style="left:777.6px;top:395.40px;width:120px;font-size:8.55px;color:#222">-41.22</div>
<div class="t r" style="left:851.6px;top:395.40px;width:120px;font-size:8.55px;color:#222">940.80</div>
<div class="a" style="left:13.0px;top:406.80px;width:962.6px;height:14.45px;background:#ebebeb"></div>
<div class="a" style="left:559.4px;top:407.30px;width:63.2px;height:13.50px;background:#5fe65f"></div>
<svg style="left:15.6px;top:409.5px" width="10" height="11" viewBox="0 0 10 11"><path d="M0.8 0.6h4.8l2.4 2.4v6.6h-7.2z" fill="#fff" stroke="#7d8ea8" stroke-width="0.8"/><path d="M5.6 0.6v2.4h2.4" fill="none" stroke="#7d8ea8" stroke-width="0.6"/><circle cx="7.2" cy="8.2" r="2.5" fill="#2a78d8"/><circle cx="6.5" cy="7.4" r="0.8" fill="#fff" fill-opacity="0.5"/></svg>
<div class="t" style="left:28.8px;top:409.80px;font-size:8.55px;color:#222">52188623</div>
<div class="t r" style="left:120.6px;top:409.80px;width:120px;font-size:8.55px;color:#222;letter-spacing:-0.06px">2025.12.16 02:30:09</div>
<div class="t r" style="left:186.0px;top:409.80px;width:120px;font-size:8.55px;color:#222">buy</div>
<div class="t r" style="left:238.0px;top:409.80px;width:120px;font-size:8.55px;color:#222">0.30</div>
<div class="t r" style="left:303.6px;top:409.80px;width:120px;font-size:8.55px;color:#222">xauusd</div>
<div class="t r" style="left:370.0px;top:409.80px;width:120px;font-size:8.55px;color:#222">4309.82</div>
<div class="t r" style="left:435.8px;top:409.80px;width:120px;font-size:8.55px;color:#222">4265.68</div>
<div class="t r" style="left:501.4px;top:409.80px;width:120px;font-size:8.55px;color:#083808">4341.15</div>
<div class="t r" style="left:565.8px;top:409.80px;width:200px;font-size:8.55px;color:#222;letter-spacing:-0.06px">2025.12.17 07:48:10</div>
<div class="t r" style="left:711.4px;top:409.80px;width:120px;font-size:8.55px;color:#222">4341.15</div>
<div class="t r" style="left:777.6px;top:409.80px;width:120px;font-size:8.55px;color:#222">-41.22</div>
<div class="t r" style="left:851.6px;top:409.80px;width:120px;font-size:8.55px;color:#222">939.90</div>
<div class="a" style="left:13.0px;top:421.20px;width:962.6px;height:14.45px;background:#ffffff"></div>
<div class="a" style="left:559.4px;top:421.70px;width:63.2px;height:13.50px;background:#5fe65f"></div>
<svg style="left:15.6px;top:423.9px" width="10" height="11" viewBox="0 0 10 11"><path d="M0.8 0.6h4.8l2.4 2.4v6.6h-7.2z" fill="#fff" stroke="#7d8ea8" stroke-width="0.8"/><path d="M5.6 0.6v2.4h2.4" fill="none" stroke="#7d8ea8" stroke-width="0.6"/><circle cx="7.2" cy="8.2" r="2.5" fill="#2a78d8"/><circle cx="6.5" cy="7.4" r="0.8" fill="#fff" fill-opacity="0.5"/></svg>
<div class="t" style="left:28.8px;top:424.20px;font-size:8.55px;color:#222">52188624</div>
<div class="t r" style="left:120.6px;top:424.20px;width:120px;font-size:8.55px;color:#222;letter-spacing:-0.06px">2025.12.16 02:30:15</div>
<div class="t r" style="left:186.0px;top:424.20px;width:120px;font-size:8.55px;color:#222">buy</div>
<div class="t r" style="left:238.0px;top:424.20px;width:120px;font-size:8.55px;color:#222">0.30</div>
<div class="t r" style="left:303.6px;top:424.20px;width:120px;font-size:8.55px;color:#222">xauusd</div>
<div class="t r" style="left:370.0px;top:424.20px;width:120px;font-size:8.55px;color:#222">4309.79</div>
<div class="t r" style="left:435.8px;top:424.20px;width:120px;font-size:8.55px;color:#222">4265.68</div>
<div class="t r" style="left:501.4px;top:424.20px;width:120px;font-size:8.55px;color:#083808">4341.15</div>
<div class="t r" style="left:565.8px;top:424.20px;width:200px;font-size:8.55px;color:#222;letter-spacing:-0.06px">2025.12.17 07:48:10</div>
<div class="t r" style="left:711.4px;top:424.20px;width:120px;font-size:8.55px;color:#222">4341.15</div>
<div class="t r" style="left:777.6px;top:424.20px;width:120px;font-size:8.55px;color:#222">-41.22</div>
<div class="t r" style="left:851.6px;top:424.20px;width:120px;font-size:8.55px;color:#222">940.80</div>
<div class="a" style="left:13.0px;top:435.60px;width:962.6px;height:14.45px;background:#ebebeb"></div>
<div class="a" style="left:559.4px;top:436.10px;width:63.2px;height:13.50px;background:#5fe65f"></div>
<svg style="left:15.6px;top:438.3px" width="10" height="11" viewBox="0 0 10 11"><path d="M0.8 0.6h4.8l2.4 2.4v6.6h-7.2z" fill="#fff" stroke="#7d8ea8" stroke-width="0.8"/><path d="M5.6 0.6v2.4h2.4" fill="none" stroke="#7d8ea8" stroke-width="0.6"/><circle cx="7.2" cy="8.2" r="2.5" fill="#2a78d8"/><circle cx="6.5" cy="7.4" r="0.8" fill="#fff" fill-opacity="0.5"/></svg>
<div class="t" style="left:28.8px;top:438.60px;font-size:8.55px;color:#222">52188627</div>
<div class="t r" style="left:120.6px;top:438.60px;width:120px;font-size:8.55px;color:#222;letter-spacing:-0.06px">2025.12.16 02:30:21</div>
<div class="t r" style="left:186.0px;top:438.60px;width:120px;font-size:8.55px;color:#222">buy</div>
<div class="t r" style="left:238.0px;top:438.60px;width:120px;font-size:8.55px;color:#222">0.30</div>
<div class="t r" style="left:303.6px;top:438.60px;width:120px;font-size:8.55px;color:#222">xauusd</div>
<div class="t r" style="left:370.0px;top:438.60px;width:120px;font-size:8.55px;color:#222">4309.88</div>
<div class="t r" style="left:435.8px;top:438.60px;width:120px;font-size:8.55px;color:#222">4265.68</div>
<div class="t r" style="left:501.4px;top:438.60px;width:120px;font-size:8.55px;color:#083808">4341.15</div>
<div class="t r" style="left:565.8px;top:438.60px;width:200px;font-size:8.55px;color:#222;letter-spacing:-0.06px">2025.12.17 07:48:10</div>
<div class="t r" style="left:711.4px;top:438.60px;width:120px;font-size:8.55px;color:#222">4341.15</div>
<div class="t r" style="left:777.6px;top:438.60px;width:120px;font-size:8.55px;color:#222">-41.22</div>
<div class="t r" style="left:851.6px;top:438.60px;width:120px;font-size:8.55px;color:#222">938.10</div>
<div class="a" style="left:13.0px;top:450.00px;width:962.6px;height:14.45px;background:#ffffff"></div>
<div class="a" style="left:559.4px;top:450.50px;width:63.2px;height:13.50px;background:#5fe65f"></div>
<svg style="left:15.6px;top:452.7px" width="10" height="11" viewBox="0 0 10 11"><path d="M0.8 0.6h4.8l2.4 2.4v6.6h-7.2z" fill="#fff" stroke="#7d8ea8" stroke-width="0.8"/><path d="M5.6 0.6v2.4h2.4" fill="none" stroke="#7d8ea8" stroke-width="0.6"/><circle cx="7.2" cy="8.2" r="2.5" fill="#2a78d8"/><circle cx="6.5" cy="7.4" r="0.8" fill="#fff" fill-opacity="0.5"/></svg>
<div class="t" style="left:28.8px;top:453.00px;font-size:8.55px;color:#222">52188628</div>
<div class="t r" style="left:120.6px;top:453.00px;width:120px;font-size:8.55px;color:#222;letter-spacing:-0.06px">2025.12.16 02:30:30</div>
<div class="t r" style="left:186.0px;top:453.00px;width:120px;font-size:8.55px;color:#222">buy</div>
<div class="t r" style="left:238.0px;top:453.00px;width:120px;font-size:8.55px;color:#222">0.30</div>
<div class="t r" style="left:303.6px;top:453.00px;width:120px;font-size:8.55px;color:#222">xauusd</div>
<div class="t r" style="left:370.0px;top:453.00px;width:120px;font-size:8.55px;color:#222">4309.76</div>
<div class="t r" style="left:435.8px;top:453.00px;width:120px;font-size:8.55px;color:#222">4265.68</div>
<div class="t r" style="left:501.4px;top:453.00px;width:120px;font-size:8.55px;color:#083808">4341.15</div>
<div class="t r" style="left:565.8px;top:453.00px;width:200px;font-size:8.55px;color:#222;letter-spacing:-0.06px">2025.12.17 07:48:10</div>
<div class="t r" style="left:711.4px;top:453.00px;width:120px;font-size:8.55px;color:#222">4341.15</div>
<div class="t r" style="left:777.6px;top:453.00px;width:120px;font-size:8.55px;color:#222">-41.22</div>
<div class="t r" style="left:851.6px;top:453.00px;width:120px;font-size:8.55px;color:#222">941.70</div>
<div class="a" style="left:13.0px;top:464.40px;width:962.6px;height:14.45px;background:#ebebeb"></div>
<div class="a" style="left:559.4px;top:464.90px;width:63.2px;height:13.50px;background:#5fe65f"></div>
<svg style="left:15.6px;top:467.1px" width="10" height="11" viewBox="0 0 10 11"><path d="M0.8 0.6h4.8l2.4 2.4v6.6h-7.2z" fill="#fff" stroke="#7d8ea8" stroke-width="0.8"/><path d="M5.6 0.6v2.4h2.4" fill="none" stroke="#7d8ea8" stroke-width="0.6"/><circle cx="7.2" cy="8.2" r="2.5" fill="#2a78d8"/><circle cx="6.5" cy="7.4" r="0.8" fill="#fff" fill-opacity="0.5"/></svg>
<div class="t" style="left:28.8px;top:467.40px;font-size:8.55px;color:#222">52188635</div>
<div class="t r" style="left:120.6px;top:467.40px;width:120px;font-size:8.55px;color:#222;letter-spacing:-0.06px">2025.12.16 02:31:10</div>
<div class="t r" style="left:186.0px;top:467.40px;width:120px;font-size:8.55px;color:#222">buy</div>
<div class="t r" style="left:238.0px;top:467.40px;width:120px;font-size:8.55px;color:#222">0.30</div>
<div class="t r" style="left:303.6px;top:467.40px;width:120px;font-size:8.55px;color:#222">xauusd</div>
<div class="t r" style="left:370.0px;top:467.40px;width:120px;font-size:8.55px;color:#222">4309.22</div>
<div class="t r" style="left:435.8px;top:467.40px;width:120px;font-size:8.55px;color:#222">4265.68</div>
<div class="t r" style="left:501.4px;top:467.40px;width:120px;font-size:8.55px;color:#083808">4341.15</div>
<div class="t r" style="left:565.8px;top:467.40px;width:200px;font-size:8.55px;color:#222;letter-spacing:-0.06px">2025.12.17 07:48:10</div>
<div class="t r" style="left:711.4px;top:467.40px;width:120px;font-size:8.55px;color:#222">4341.15</div>
<div class="t r" style="left:777.6px;top:467.40px;width:120px;font-size:8.55px;color:#222">-41.22</div>
<div class="t r" style="left:851.6px;top:467.40px;width:120px;font-size:8.55px;color:#222">957.90</div>
<div class="a" style="left:13.0px;top:478.80px;width:962.6px;height:14.45px;background:#ffffff"></div>
<div class="a" style="left:559.4px;top:479.30px;width:63.2px;height:13.50px;background:#5fe65f"></div>
<svg style="left:15.6px;top:481.5px" width="10" height="11" viewBox="0 0 10 11"><path d="M0.8 0.6h4.8l2.4 2.4v6.6h-7.2z" fill="#fff" stroke="#7d8ea8" stroke-width="0.8"/><path d="M5.6 0.6v2.4h2.4" fill="none" stroke="#7d8ea8" stroke-width="0.6"/><circle cx="7.2" cy="8.2" r="2.5" fill="#2a78d8"/><circle cx="6.5" cy="7.4" r="0.8" fill="#fff" fill-opacity="0.5"/></svg>
<div class="t" style="left:28.8px;top:481.80px;font-size:8.55px;color:#222">52188640</div>
<div class="t r" style="left:120.6px;top:481.80px;width:120px;font-size:8.55px;color:#222;letter-spacing:-0.06px">2025.12.16 02:31:25</div>
<div class="t r" style="left:186.0px;top:481.80px;width:120px;font-size:8.55px;color:#222">buy</div>
<div class="t r" style="left:238.0px;top:481.80px;width:120px;font-size:8.55px;color:#222">0.30</div>
<div class="t r" style="left:303.6px;top:481.80px;width:120px;font-size:8.55px;color:#222">xauusd</div>
<div class="t r" style="left:370.0px;top:481.80px;width:120px;font-size:8.55px;color:#222">4309.50</div>
<div class="t r" style="left:435.8px;top:481.80px;width:120px;font-size:8.55px;color:#222">4265.68</div>
<div class="t r" style="left:501.4px;top:481.80px;width:120px;font-size:8.55px;color:#083808">4341.15</div>
<div class="t r" style="left:565.8px;top:481.80px;width:200px;font-size:8.55px;color:#222;letter-spacing:-0.06px">2025.12.17 07:48:10</div>
<div class="t r" style="left:711.4px;top:481.80px;width:120px;font-size:8.55px;color:#222">4341.15</div>
<div class="t r" style="left:777.6px;top:481.80px;width:120px;font-size:8.55px;color:#222">-41.22</div>
<div class="t r" style="left:851.6px;top:481.80px;width:120px;font-size:8.55px;color:#222">949.50</div>
<div class="a" style="left:13.0px;top:493.20px;width:962.6px;height:14.45px;background:#ebebeb"></div>
<div class="a" style="left:559.4px;top:493.70px;width:63.2px;height:13.50px;background:#5fe65f"></div>
<svg style="left:15.6px;top:495.9px" width="10" height="11" viewBox="0 0 10 11"><path d="M0.8 0.6h4.8l2.4 2.4v6.6h-7.2z" fill="#fff" stroke="#7d8ea8" stroke-width="0.8"/><path d="M5.6 0.6v2.4h2.4" fill="none" stroke="#7d8ea8" stroke-width="0.6"/><circle cx="7.2" cy="8.2" r="2.5" fill="#2a78d8"/><circle cx="6.5" cy="7.4" r="0.8" fill="#fff" fill-opacity="0.5"/></svg>
<div class="t" style="left:28.8px;top:496.20px;font-size:8.55px;color:#222">52188642</div>
<div class="t r" style="left:120.6px;top:496.20px;width:120px;font-size:8.55px;color:#222;letter-spacing:-0.06px">2025.12.16 02:31:53</div>
<div class="t r" style="left:186.0px;top:496.20px;width:120px;font-size:8.55px;color:#222">buy</div>
<div class="t r" style="left:238.0px;top:496.20px;width:120px;font-size:8.55px;color:#222">0.30</div>
<div class="t r" style="left:303.6px;top:496.20px;width:120px;font-size:8.55px;color:#222">xauusd</div>
<div class="t r" style="left:370.0px;top:496.20px;width:120px;font-size:8.55px;color:#222">4309.18</div>
<div class="t r" style="left:435.8px;top:496.20px;width:120px;font-size:8.55px;color:#222">4265.68</div>
<div class="t r" style="left:501.4px;top:496.20px;width:120px;font-size:8.55px;color:#083808">4341.15</div>
<div class="t r" style="left:565.8px;top:496.20px;width:200px;font-size:8.55px;color:#222;letter-spacing:-0.06px">2025.12.17 07:48:10</div>
<div class="t r" style="left:711.4px;top:496.20px;width:120px;font-size:8.55px;color:#222">4341.15</div>
<div class="t r" style="left:777.6px;top:496.20px;width:120px;font-size:8.55px;color:#222">-41.22</div>
<div class="t r" style="left:851.6px;top:496.20px;width:120px;font-size:8.55px;color:#222">959.10</div>
<div class="a" style="left:13.0px;top:507.60px;width:962.6px;height:14.45px;background:#ffffff"></div>
<div class="a" style="left:559.4px;top:508.10px;width:63.2px;height:13.50px;background:#5fe65f"></div>
<svg style="left:15.6px;top:510.3px" width="10" height="11" viewBox="0 0 10 11"><path d="M0.8 0.6h4.8l2.4 2.4v6.6h-7.2z" fill="#fff" stroke="#7d8ea8" stroke-width="0.8"/><path d="M5.6 0.6v2.4h2.4" fill="none" stroke="#7d8ea8" stroke-width="0.6"/><circle cx="7.2" cy="8.2" r="2.5" fill="#2a78d8"/><circle cx="6.5" cy="7.4" r="0.8" fill="#fff" fill-opacity="0.5"/></svg>
<div class="t" style="left:28.8px;top:510.60px;font-size:8.55px;color:#222">52188702</div>
<div class="t r" style="left:120.6px;top:510.60px;width:120px;font-size:8.55px;color:#222;letter-spacing:-0.06px">2025.12.16 02:36:39</div>
<div class="t r" style="left:186.0px;top:510.60px;width:120px;font-size:8.55px;color:#222">buy</div>
<div class="t r" style="left:238.0px;top:510.60px;width:120px;font-size:8.55px;color:#222">0.30</div>
<div class="t r" style="left:303.6px;top:510.60px;width:120px;font-size:8.55px;color:#222">xauusd</div>
<div class="t r" style="left:370.0px;top:510.60px;width:120px;font-size:8.55px;color:#222">4310.43</div>
<div class="t r" style="left:435.8px;top:510.60px;width:120px;font-size:8.55px;color:#222">4265.68</div>
<div class="t r" style="left:501.4px;top:510.60px;width:120px;font-size:8.55px;color:#083808">4341.15</div>
<div class="t r" style="left:565.8px;top:510.60px;width:200px;font-size:8.55px;color:#222;letter-spacing:-0.06px">2025.12.17 07:48:10</div>
<div class="t r" style="left:711.4px;top:510.60px;width:120px;font-size:8.55px;color:#222">4341.15</div>
<div class="t r" style="left:777.6px;top:510.60px;width:120px;font-size:8.55px;color:#222">-41.22</div>
<div class="t r" style="left:851.6px;top:510.60px;width:120px;font-size:8.55px;color:#222">921.60</div>
<div class="a" style="left:13.0px;top:522.00px;width:962.6px;height:14.45px;background:#ebebeb"></div>
<div class="a" style="left:559.4px;top:522.50px;width:63.2px;height:13.50px;background:#5fe65f"></div>
<svg style="left:15.6px;top:524.7px" width="10" height="11" viewBox="0 0 10 11"><path d="M0.8 0.6h4.8l2.4 2.4v6.6h-7.2z" fill="#fff" stroke="#7d8ea8" stroke-width="0.8"/><path d="M5.6 0.6v2.4h2.4" fill="none" stroke="#7d8ea8" stroke-width="0.6"/><circle cx="7.2" cy="8.2" r="2.5" fill="#2a78d8"/><circle cx="6.5" cy="7.4" r="0.8" fill="#fff" fill-opacity="0.5"/></svg>
<div class="t" style="left:28.8px;top:525.00px;font-size:8.55px;color:#222">52189394</div>
<div class="t r" style="left:120.6px;top:525.00px;width:120px;font-size:8.55px;color:#222;letter-spacing:-0.06px">2025.12.16 02:54:01</div>
<div class="t r" style="left:186.0px;top:525.00px;width:120px;font-size:8.55px;color:#222">buy</div>
<div class="t r" style="left:238.0px;top:525.00px;width:120px;font-size:8.55px;color:#222">0.30</div>
<div class="t r" style="left:303.6px;top:525.00px;width:120px;font-size:8.55px;color:#222">xauusd</div>
<div class="t r" style="left:370.0px;top:525.00px;width:120px;font-size:8.55px;color:#222">4308.71</div>
<div class="t r" style="left:435.8px;top:525.00px;width:120px;font-size:8.55px;color:#222">4265.68</div>
<div class="t r" style="left:501.4px;top:525.00px;width:120px;font-size:8.55px;color:#083808">4341.15</div>
<div class="t r" style="left:565.8px;top:525.00px;width:200px;font-size:8.55px;color:#222;letter-spacing:-0.06px">2025.12.17 07:48:10</div>
<div class="t r" style="left:711.4px;top:525.00px;width:120px;font-size:8.55px;color:#222">4341.15</div>
<div class="t r" style="left:777.6px;top:525.00px;width:120px;font-size:8.55px;color:#222">-41.22</div>
<div class="t r" style="left:851.6px;top:525.00px;width:120px;font-size:8.55px;color:#222">973.20</div>
<div class="a" style="left:13.0px;top:536.40px;width:962.6px;height:14.45px;background:#ffffff"></div>
<svg style="left:15.6px;top:539.1px" width="10" height="11" viewBox="0 0 10 11"><path d="M0.8 0.6h4.8l2.4 2.4v6.6h-7.2z" fill="#fff" stroke="#7d8ea8" stroke-width="0.8"/><path d="M5.6 0.6v2.4h2.4" fill="none" stroke="#7d8ea8" stroke-width="0.6"/><circle cx="7.2" cy="8.2" r="2.5" fill="#2a78d8"/><circle cx="6.5" cy="7.4" r="0.8" fill="#fff" fill-opacity="0.5"/></svg>
<div class="t" style="left:28.8px;top:539.40px;font-size:8.55px;color:#222">52334137</div>
<div class="t r" style="left:120.6px;top:539.40px;width:120px;font-size:8.55px;color:#222;letter-spacing:-0.06px">2025.12.17 14:30:31</div>
<div class="t r" style="left:186.0px;top:539.40px;width:120px;font-size:8.55px;color:#222">buy</div>
<div class="t r" style="left:238.0px;top:539.40px;width:120px;font-size:8.55px;color:#222">0.01</div>
<div class="t r" style="left:303.6px;top:539.40px;width:120px;font-size:8.55px;color:#222">eurusd</div>
<div class="t r" style="left:370.0px;top:539.40px;width:120px;font-size:8.55px;color:#222">1.17196</div>
<div class="t r" style="left:435.8px;top:539.40px;width:120px;font-size:8.55px;color:#222">1.16984</div>
<div class="t r" style="left:501.4px;top:539.40px;width:120px;font-size:8.55px;color:#222">1.17382</div>
<div class="t r" style="left:565.8px;top:539.40px;width:200px;font-size:8.55px;color:#222;letter-spacing:-0.06px">2025.12.17 15:17:02</div>
<div class="t r" style="left:711.4px;top:539.40px;width:120px;font-size:8.55px;color:#222">1.17257</div>
<div class="t r" style="left:777.6px;top:539.40px;width:120px;font-size:8.55px;color:#222">0.00</div>
<div class="t r" style="left:851.6px;top:539.40px;width:120px;font-size:8.55px;color:#222">0.61</div>
<div class="a" style="left:13.0px;top:550.80px;width:962.6px;height:4.20px;background:#ebebeb"></div>
<svg style="left:15.6px;top:552.4px" width="10" height="3" viewBox="0 0 10 3"><path d="M0.8 3V0.6h4.8l2.4 2.4" fill="#fff" stroke="#7d8ea8" stroke-width="0.8"/></svg>
<div class="a" style="left:98.0px;top:206px;width:1px;height:349.0px;background:rgba(140,140,140,0.22)"></div>
<div class="a" style="left:243.2px;top:206px;width:1px;height:349.0px;background:rgba(140,140,140,0.22)"></div>
<div class="a" style="left:308.6px;top:206px;width:1px;height:349.0px;background:rgba(140,140,140,0.22)"></div>
<div class="a" style="left:361.2px;top:206px;width:1px;height:349.0px;background:rgba(140,140,140,0.22)"></div>
<div class="a" style="left:426.8px;top:206px;width:1px;height:349.0px;background:rgba(140,140,140,0.22)"></div>
<div class="a" style="left:492.2px;top:206px;width:1px;height:349.0px;background:rgba(140,140,140,0.22)"></div>
<div class="a" style="left:558.3px;top:206px;width:1px;height:349.0px;background:rgba(140,140,140,0.22)"></div>
<div class="a" style="left:624.0px;top:206px;width:1px;height:349.0px;background:rgba(140,140,140,0.22)"></div>
<div class="a" style="left:768.3px;top:206px;width:1px;height:349.0px;background:rgba(140,140,140,0.22)"></div>
<div class="a" style="left:834.0px;top:206px;width:1px;height:349.0px;background:rgba(140,140,140,0.22)"></div>
<div class="a" style="left:899.6px;top:206px;width:1px;height:349.0px;background:rgba(140,140,140,0.22)"></div>
<div class="a" style="left:975.6px;top:206px;width:11px;height:349.2px;background:#fff;border-left:1px solid #e0e0e0;border-right:1px solid #e0e0e0"></div>
<div class="a" style="left:976.4px;top:206.2px;width:9.8px;height:11.6px;background:#fdfdfd;border:1px solid #dcdcdc"></div>
<div class="a" style="left:976.4px;top:218px;width:9.8px;height:92.4px;background:#d0d0d0"></div>
<div class="a" style="left:976.4px;top:542px;width:9.8px;height:13px;background:#fdfdfd;border:1px solid #dcdcdc"></div>
<svg style="left:978.3px;top:209.6px" width="6" height="5" viewBox="0 0 6 5"><path d="M0.5 3.8L3 1.2l2.5 2.6" stroke="#333" stroke-width="1.1" fill="none"/></svg>
<svg style="left:978.4px;top:546.4px" width="6" height="5" viewBox="0 0 6 5"><path d="M0.5 1.2L3 3.8 5.5 1.2" stroke="#333" stroke-width="1.1" fill="none"/></svg>
<div class="a" style="left:979px;top:262.0px;width:4.6px;height:1px;background:#333"></div>
<div class="a" style="left:979px;top:263.6px;width:4.6px;height:1px;background:#333"></div>
<div class="a" style="left:979px;top:265.2px;width:4.6px;height:1px;background:#333"></div>
<div class="a" style="left:986.6px;top:205px;width:2px;height:351px;background:#f0f0f0"></div>
<div class="a" style="left:12.4px;top:555px;width:975.8px;height:1.2px;background:#555"></div>
<div class="a" style="left:3px;top:556.2px;width:985.6px;height:16px;background:#f0f0f0"></div>
<div class="a" style="left:75.6px;top:555px;width:46.4px;height:15.2px;background:#fff;border:1px solid #333;border-top:none;border-radius:0 0 1.5px 1.5px"></div>
<div class="t" style="left:22.0px;top:558.9px;font-size:8.25px;color:#777">交易</div>
<div class="t" style="left:52.0px;top:558.9px;font-size:8.25px;color:#777">展示</div>
<div class="t" style="left:82.0px;top:558.9px;font-size:8.25px;color:#111">账户历史</div>
<div class="t" style="left:129.0px;top:558.9px;font-size:8.25px;color:#777">新闻</div>
<div class="t" style="left:168.7px;top:558.9px;font-size:8.25px;color:#777">警报</div>
<div class="t" style="left:199.5px;top:558.9px;font-size:8.25px;color:#777">邮箱</div>
<div class="t" style="left:238.4px;top:558.9px;font-size:8.25px;color:#777">市场</div>
<div class="t" style="left:268.7px;top:558.9px;font-size:8.25px;color:#777">信号</div>
<div class="t" style="left:299.0px;top:558.9px;font-size:8.25px;color:#777">文章</div>
<div class="t" style="left:347.0px;top:558.9px;font-size:8.25px;color:#777">代码库</div>
<div class="t" style="left:385.6px;top:558.9px;font-size:8.25px;color:#777">EA</div>
<div class="t" style="left:409.6px;top:558.9px;font-size:8.25px;color:#777">日志</div>
<div class="t" style="left:147.2px;top:562.6px;font-size:6.5px;font-weight:bold;color:#e02020;letter-spacing:0.2px">71</div>
<div class="t" style="left:217.2px;top:562.6px;font-size:6.5px;font-weight:bold;color:#e02020;letter-spacing:0.2px">84</div>
<div class="t" style="left:316.8px;top:562.6px;font-size:6.5px;font-weight:bold;color:#e02020;letter-spacing:0.2px">2143</div>
<div class="a" style="left:45.5px;top:558px;width:1px;height:10.6px;background:#8a8a8a"></div>
<div class="a" style="left:161.6px;top:558px;width:1px;height:10.6px;background:#8a8a8a"></div>
<div class="a" style="left:192.0px;top:558px;width:1px;height:10.6px;background:#8a8a8a"></div>
<div class="a" style="left:232.0px;top:558px;width:1px;height:10.6px;background:#8a8a8a"></div>
<div class="a" style="left:261.9px;top:558px;width:1px;height:10.6px;background:#8a8a8a"></div>
<div class="a" style="left:292.4px;top:558px;width:1px;height:10.6px;background:#8a8a8a"></div>
<div class="a" style="left:340.0px;top:558px;width:1px;height:10.6px;background:#8a8a8a"></div>
<div class="a" style="left:378.8px;top:558px;width:1px;height:10.6px;background:#8a8a8a"></div>
<div class="a" style="left:402.5px;top:558px;width:1px;height:10.6px;background:#8a8a8a"></div>
<div class="a" style="left:432.0px;top:558px;width:1px;height:10.6px;background:#8a8a8a"></div>
<div class="a" style="left:3px;top:572px;width:985.6px;height:1px;background:#b8b8b8"></div>
<div class="a" style="left:3px;top:573px;width:985.6px;height:4px;background:#f4f4f4"></div>
<div class="a" style="left:4.2px;top:213.6px;width:8.2px;height:358px;background:linear-gradient(180deg,#a9c2e4 0%,#9db8de 100%)"></div>
<div class="t" style="left:4.2px;top:206.2px;font-size:7.6px;font-weight:bold;color:#111">×</div>
<div class="t" style="left:-0.2px;top:558.2px;width:17px;height:8px;font-size:7.8px;font-weight:bold;color:#18244a;transform:rotate(-90deg);transform-origin:50% 50%;text-align:center">终端</div>
<svg style="left:686.6px;top:521.4px;opacity:.66" width="37" height="29" viewBox="0 0 37 29"><ellipse cx="10.4" cy="9.2" rx="9.8" ry="8.3" fill="#8a8a8a"/><path d="M4.6 15l-1.4 4.2 4.6-2.2z" fill="#8a8a8a"/><ellipse cx="25.6" cy="18" rx="10.6" ry="9" fill="#a2a2a2" stroke="#ededed" stroke-width="1.2"/><path d="M31 25.6l1.4 3-4-1.4z" fill="#a2a2a2"/><circle cx="7" cy="7" r="1.4" fill="#e8e8e8"/><circle cx="13.6" cy="7" r="1.4" fill="#e8e8e8"/><circle cx="22" cy="15.6" r="1.5" fill="#ededed"/><circle cx="29.4" cy="15.6" r="1.5" fill="#ededed"/></svg>
<div class="t" id="wm1" style="left:731.8px;top:523.2px;letter-spacing:2.2px;font-size:27.6px;color:#868686;opacity:.8;text-shadow:0.5px 0.5px 0 rgba(255,255,255,.6)">公众号</div>
<div class="t" style="left:826.4px;top:520.2px;font-size:27.6px;color:#868686;opacity:.8;text-shadow:0.5px 0.5px 0 rgba(255,255,255,.6)">·</div>
<div class="t" id="wm2" style="left:848.7px;top:523.2px;letter-spacing:0.6px;font-size:27.6px;color:#868686;opacity:.8;text-shadow:0.5px 0.5px 0 rgba(255,255,255,.6)">斑马投诉</div>
<svg style="left:890px;top:540px;opacity:.11" width="60" height="37" viewBox="0 0 60 37"><circle cx="28" cy="30" r="22" fill="none" stroke="#8a8a8a" stroke-width="4"/><path d="M16 26l20-12M19 33l22-13M24 39l20-12" stroke="#9a9a9a" stroke-width="2.600"/></svg>

</div></body></html>
